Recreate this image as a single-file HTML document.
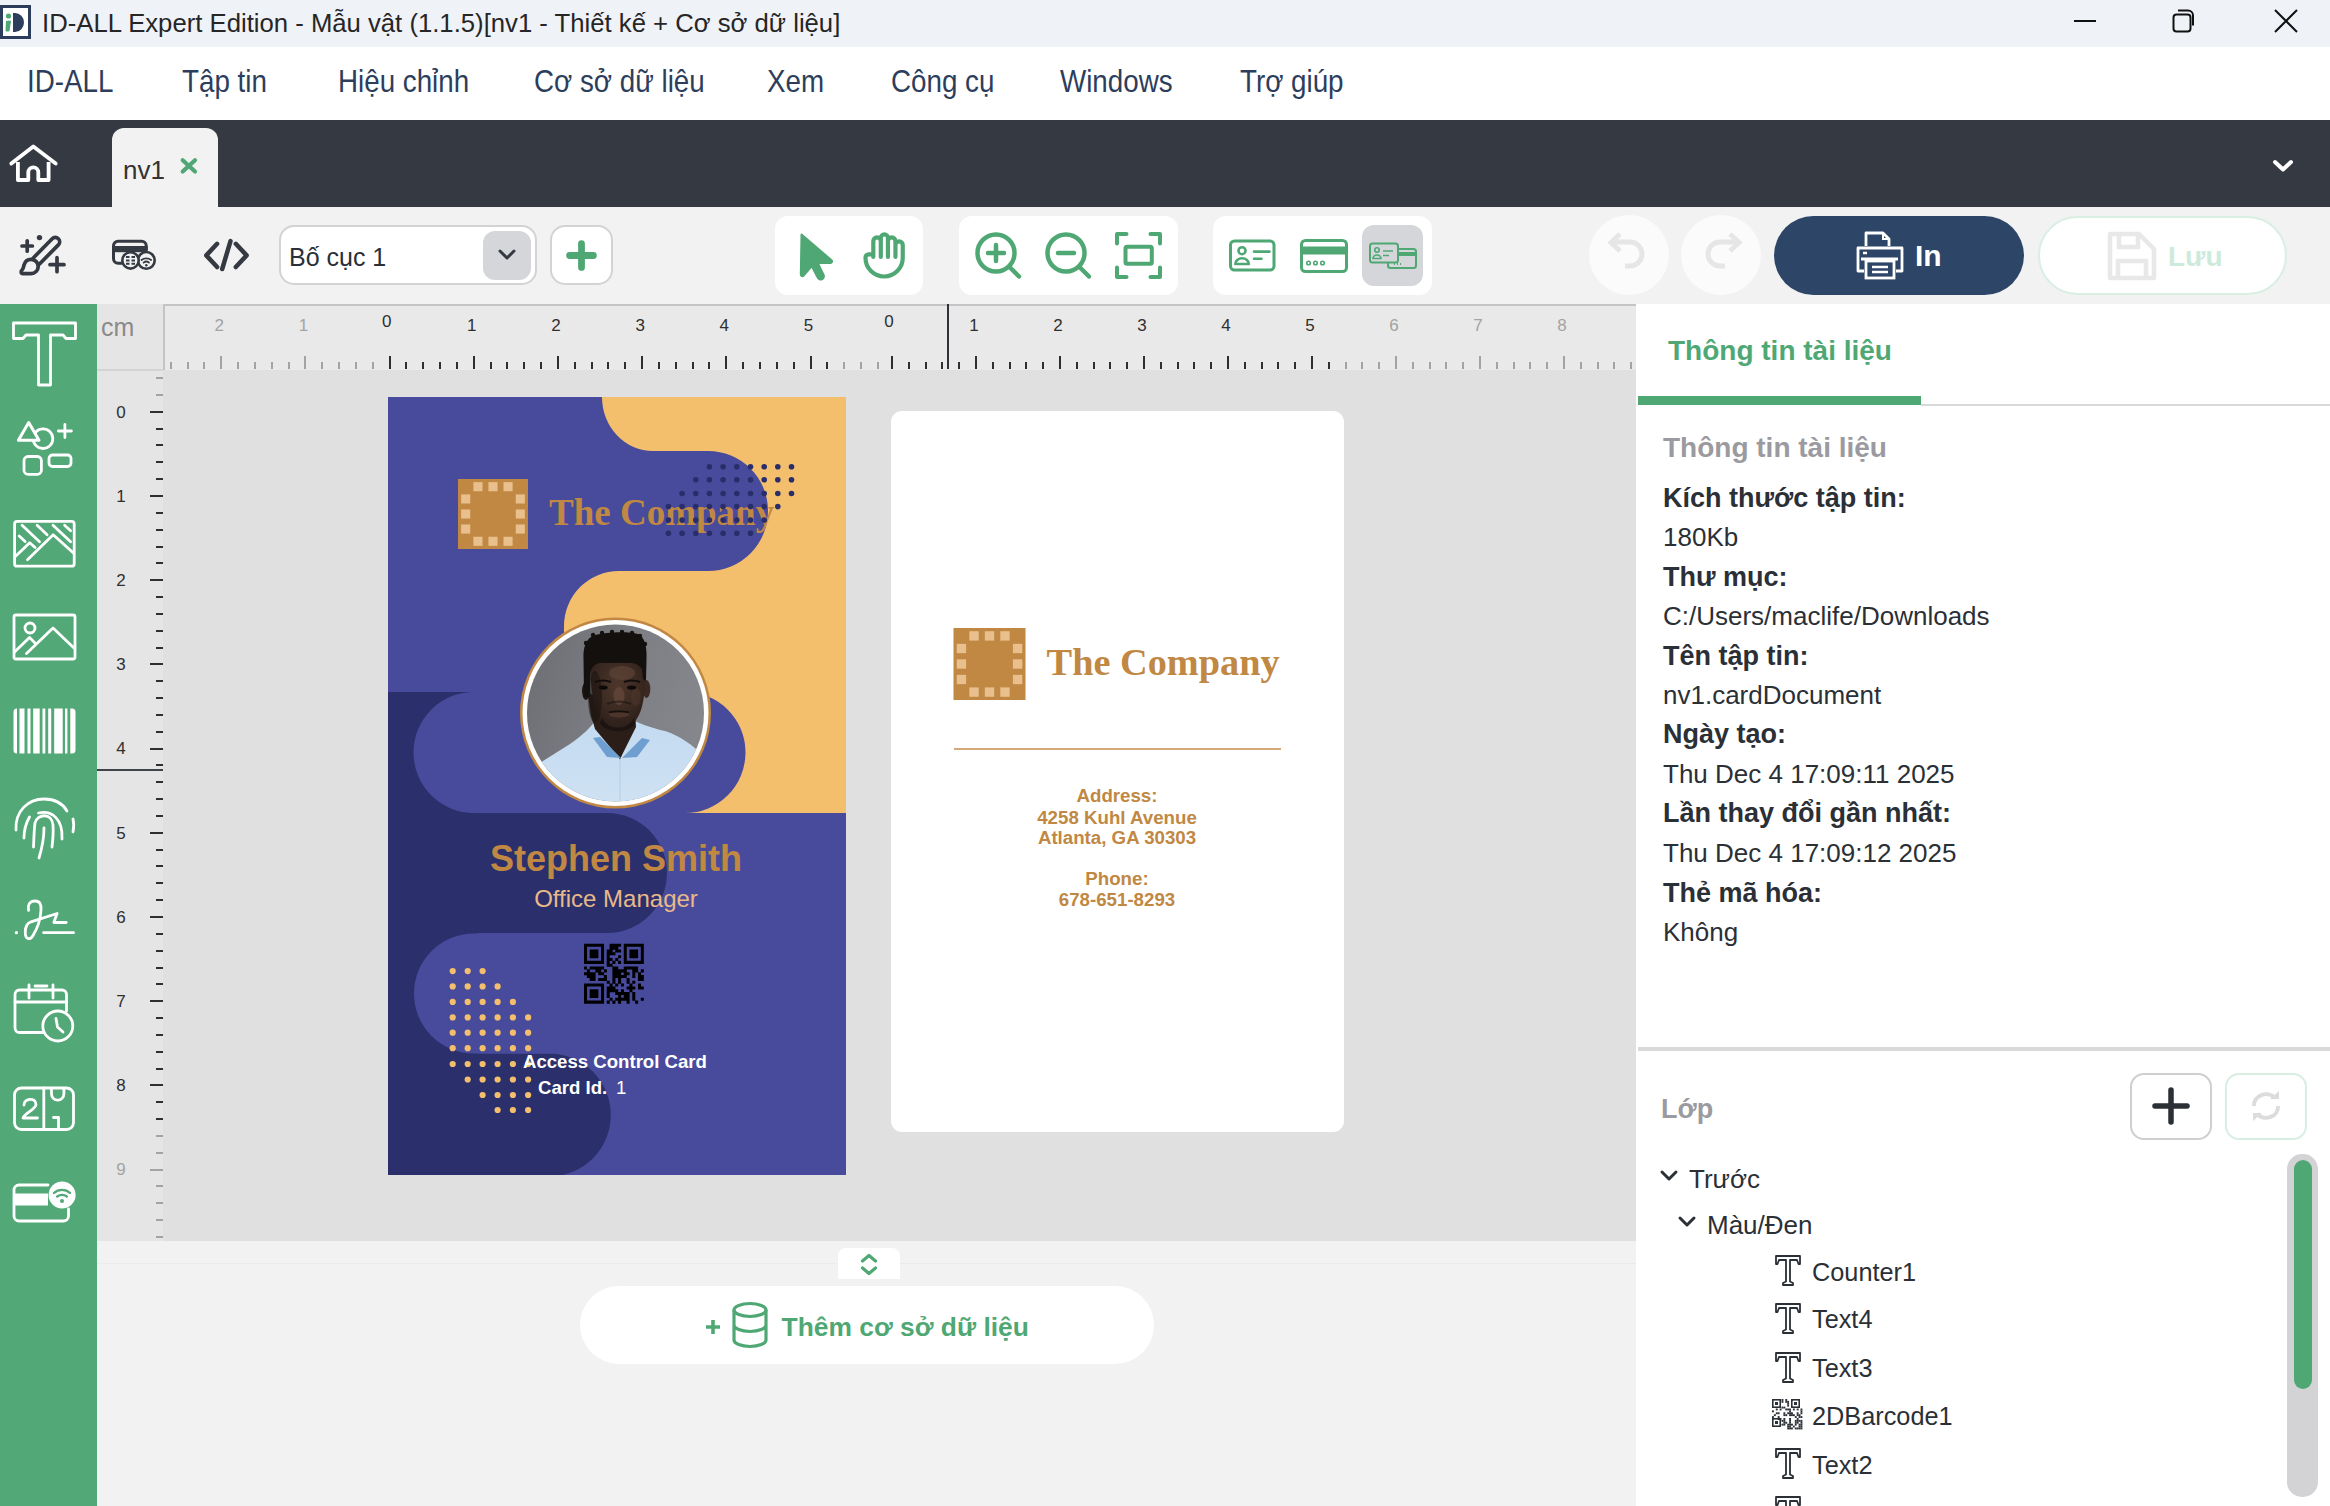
<!DOCTYPE html>
<html><head><meta charset="utf-8"><title>ID-ALL</title>
<style>
html,body{margin:0;padding:0;}
body{width:2330px;height:1506px;overflow:hidden;position:relative;background:#f2f2f2;font-family:"Liberation Sans", sans-serif;}
</style></head><body>
<div style="position:absolute;left:0px;top:0px;width:2330px;height:47px;background:#eff2f7;"></div>
<svg style="position:absolute;left:0px;top:5px;" width="32" height="34" viewBox="0 0 32 34"><rect x="1.5" y="1.5" width="28" height="31" fill="#fff" stroke="#2c3e5c" stroke-width="3"/><path d="M13,8 h2 a9,9.5 0 0 1 0,19 h-2 z" fill="#2c3e5c"/><circle cx="8.5" cy="11" r="2.6" fill="#4fa874"/><path d="M6,16 q3,-1 5,0 l-1.5,10 q-2,1 -4,0 z" fill="#4fa874"/></svg>
<div style="position:absolute;top:11.04px;font-family:'Liberation Sans', sans-serif;font-size:25.7px;line-height:25.7px;color:#262626;font-weight:normal;white-space:nowrap;left:42px;">ID-ALL Expert Edition - Mẫu vật (1.1.5)[nv1 - Thiết kế + Cơ sở dữ liệu]</div>
<svg style="position:absolute;left:2060px;top:0px;" width="260" height="47" viewBox="0 0 260 47"><line x1="14" y1="21" x2="36" y2="21" stroke="#111" stroke-width="2"/><rect x="113.5" y="14.5" width="17" height="17" rx="3" fill="none" stroke="#111" stroke-width="2"/><path d="M118,10.5 h10 a5,5 0 0 1 5,5 v10" fill="none" stroke="#111" stroke-width="2"/><path d="M215,10 L237,32 M237,10 L215,32" stroke="#111" stroke-width="2"/></svg>
<div style="position:absolute;left:0px;top:47px;width:2330px;height:73px;background:#ffffff;"></div>
<div style="position:absolute;top:65.68px;font-family:'Liberation Sans', sans-serif;font-size:30.5px;line-height:30.5px;color:#2c3e5c;font-weight:normal;white-space:nowrap;left:27px;transform:scaleX(0.91);transform-origin:0 0;">ID-ALL</div>
<div style="position:absolute;top:65.68px;font-family:'Liberation Sans', sans-serif;font-size:30.5px;line-height:30.5px;color:#2c3e5c;font-weight:normal;white-space:nowrap;left:182px;transform:scaleX(0.91);transform-origin:0 0;">Tập tin</div>
<div style="position:absolute;top:65.68px;font-family:'Liberation Sans', sans-serif;font-size:30.5px;line-height:30.5px;color:#2c3e5c;font-weight:normal;white-space:nowrap;left:338px;transform:scaleX(0.91);transform-origin:0 0;">Hiệu chỉnh</div>
<div style="position:absolute;top:65.68px;font-family:'Liberation Sans', sans-serif;font-size:30.5px;line-height:30.5px;color:#2c3e5c;font-weight:normal;white-space:nowrap;left:534px;transform:scaleX(0.91);transform-origin:0 0;">Cơ sở dữ liệu</div>
<div style="position:absolute;top:65.68px;font-family:'Liberation Sans', sans-serif;font-size:30.5px;line-height:30.5px;color:#2c3e5c;font-weight:normal;white-space:nowrap;left:767px;transform:scaleX(0.91);transform-origin:0 0;">Xem</div>
<div style="position:absolute;top:65.68px;font-family:'Liberation Sans', sans-serif;font-size:30.5px;line-height:30.5px;color:#2c3e5c;font-weight:normal;white-space:nowrap;left:891px;transform:scaleX(0.91);transform-origin:0 0;">Công cụ</div>
<div style="position:absolute;top:65.68px;font-family:'Liberation Sans', sans-serif;font-size:30.5px;line-height:30.5px;color:#2c3e5c;font-weight:normal;white-space:nowrap;left:1060px;transform:scaleX(0.91);transform-origin:0 0;">Windows</div>
<div style="position:absolute;top:65.68px;font-family:'Liberation Sans', sans-serif;font-size:30.5px;line-height:30.5px;color:#2c3e5c;font-weight:normal;white-space:nowrap;left:1240px;transform:scaleX(0.91);transform-origin:0 0;">Trợ giúp</div>
<div style="position:absolute;left:0px;top:120px;width:2330px;height:87px;background:#353a42;"></div>
<svg style="position:absolute;left:8px;top:142px;" width="52" height="44" viewBox="0 0 52 44"><path d="M3.3,21.5 L25.3,4.5 L47.7,21.5" fill="none" stroke="#fff" stroke-width="3.8" stroke-linecap="round" stroke-linejoin="round"/><path d="M9.9,20 V38 H20.3 V30.3 a5,5 0 0 1 10,0 V38 H40.6 V20" fill="none" stroke="#fff" stroke-width="3.8" stroke-linejoin="round"/></svg>
<div style="position:absolute;left:112px;top:128px;width:106px;height:79px;background:#f2f2f2;border-radius:12px 12px 0 0;"></div>
<div style="position:absolute;top:156.99px;font-family:'Liberation Sans', sans-serif;font-size:26px;line-height:26px;color:#333;font-weight:normal;white-space:nowrap;left:123px;">nv1</div>
<svg style="position:absolute;left:178px;top:155px;" width="22" height="22" viewBox="0 0 22 22"><path d="M4.7,5.2 L17,16.5 M17,5.2 L4.7,16.5" stroke="#4fa874" stroke-width="4.2" stroke-linecap="round"/></svg>
<svg style="position:absolute;left:2268px;top:154px;" width="30" height="22" viewBox="0 0 30 22"><path d="M7,8 L15,15.5 L23,8" fill="none" stroke="#fff" stroke-width="4" stroke-linecap="round" stroke-linejoin="round"/></svg>
<div style="position:absolute;left:0px;top:207px;width:2330px;height:97px;background:#f2f2f2;"></div>
<svg style="position:absolute;left:10px;top:225px;" width="70" height="60" viewBox="0 0 70 60"><line x1="26.4" y1="36" x2="45.3" y2="16.8" stroke="#353a42" stroke-width="12.4" stroke-linecap="round"/><line x1="26.4" y1="36" x2="45.3" y2="16.8" stroke="#f2f2f2" stroke-width="5" stroke-linecap="round"/><path d="M13,48.6 C10.8,48.6 10.5,46 12.3,44.6 C13.3,43.6 13.5,42 14,40 C15,36.3 17.8,34.3 21,34.3 C25,34.3 28.2,37.5 28.2,41.5 C28.2,45.5 25,48.6 21,48.6 Z" fill="#f2f2f2" stroke="#353a42" stroke-width="3.7" stroke-linejoin="round"/><path d="M17.2,15.8 V26.2 M12,21 H22.4 M47,32.7 V46.7 M40,39.7 H54" stroke="#353a42" stroke-width="3.7" stroke-linecap="round"/><circle cx="29.5" cy="12.6" r="2.7" fill="#353a42"/></svg>
<svg style="position:absolute;left:108px;top:236px;" width="52" height="40" viewBox="0 0 52 40"><path d="M14,27.3 H10 a4.5,4.5 0 0 1 -4.5,-4.5 V9.8 a4.5,4.5 0 0 1 4.5,-4.5 H33.7 a4.5,4.5 0 0 1 4.5,4.5 V14" fill="none" stroke="#353a42" stroke-width="3"/><rect x="4" y="10" width="35.7" height="6.2" fill="#353a42"/><circle cx="38.3" cy="24.4" r="8.4" fill="#f2f2f2" stroke="#353a42" stroke-width="2.6"/><circle cx="22.5" cy="24.4" r="8.2" fill="#f2f2f2" stroke="#353a42" stroke-width="2.6"/><path d="M18,21 h3.5 M23.5,21 h3.5 M18,24.4 h3.5 M23.5,24.4 h3.5 M18,27.8 h3.5 M23.5,27.8 h3.5" stroke="#353a42" stroke-width="2"/><path d="M33.5,24 a7,6 0 0 1 9.6,0 M35.6,26.6 a3.8,3.2 0 0 1 5.4,0" fill="none" stroke="#353a42" stroke-width="1.8" stroke-linecap="round"/><circle cx="38.3" cy="29.3" r="1.2" fill="#353a42"/></svg>
<svg style="position:absolute;left:200px;top:236px;" width="52" height="40" viewBox="0 0 52 40"><path d="M17.1,7.8 L6.3,19.4 L17.1,31 M35.8,7.8 L46.6,19.4 L35.8,31" fill="none" stroke="#353a42" stroke-width="4.5" stroke-linecap="round" stroke-linejoin="round"/><path d="M30.5,5.1 L22.2,33" stroke="#353a42" stroke-width="4.5" stroke-linecap="round"/></svg>
<div style="position:absolute;left:279px;top:225px;width:258px;height:60px;background:#fff;box-sizing:border-box;border:2px solid #d3d3d3;border-radius:15px;"></div>
<div style="position:absolute;left:483px;top:231px;width:48px;height:49px;background:#d5d6d9;border-radius:12px;"></div>
<svg style="position:absolute;left:493px;top:245px;" width="28" height="20" viewBox="0 0 28 20"><path d="M7,6 L14,13 L21,6" fill="none" stroke="#353a42" stroke-width="3" stroke-linecap="round" stroke-linejoin="round"/></svg>
<div style="position:absolute;top:245.34px;font-family:'Liberation Sans', sans-serif;font-size:25px;line-height:25px;color:#2b2f36;font-weight:normal;white-space:nowrap;left:289px;">Bố cục 1</div>
<div style="position:absolute;left:550px;top:225px;width:63px;height:60px;background:#fff;box-sizing:border-box;border:2px solid #d3d3d3;border-radius:15px;"></div>
<svg style="position:absolute;left:560px;top:235px;" width="44" height="40" viewBox="0 0 44 40"><path d="M21.5,8.6 V32.4 M9.6,20.5 H33.4" stroke="#4fa874" stroke-width="6.8" stroke-linecap="round"/></svg>
<div style="position:absolute;left:775px;top:216px;width:148px;height:79px;background:#fff;border-radius:13px;"></div>
<svg style="position:absolute;left:790px;top:225px;" width="130" height="65" viewBox="0 0 130 65"><path d="M11.5,9.5 L41.5,35.2 a1.6,1.6 0 0 1 -1,2.8 L27.8,38 L33.6,50 a3.2,3.2 0 0 1 -5.9,2.6 L21.8,41.2 L13.6,50.6 a1.6,1.6 0 0 1 -2.8,-1.1 Z" fill="#4fa874" stroke="#4fa874" stroke-width="2" stroke-linejoin="round"/><path d="M83.3,32 V16.15 A3.75,3.75 0 0 1 90.8,16.15 V32 M90.8,16.15 V13 A3.575,3.575 0 0 1 97.95,13 V32 M97.95,16.15 A3.75,3.75 0 0 1 105.45,16.15 V32 M105.45,19.95 A3.65,3.65 0 0 1 112.75,19.95 V33 A18.625,18.5 0 0 1 75.5,33 V32.5 A3.1,3.1 0 0 1 78.6,29.4 H83.3" fill="none" stroke="#4fa874" stroke-width="4.2" stroke-linecap="round" stroke-linejoin="round"/></svg>
<div style="position:absolute;left:959px;top:216px;width:219px;height:79px;background:#fff;border-radius:13px;"></div>
<svg style="position:absolute;left:970px;top:225px;" width="60" height="64" viewBox="0 0 60 64"><circle cx="26" cy="28" r="18.5" fill="none" stroke="#4fa874" stroke-width="4.5"/><path d="M39.5,42 L49,51.5" stroke="#4fa874" stroke-width="4.5" stroke-linecap="round"/><path d="M26,20 V36 M18,28 H34" stroke="#4fa874" stroke-width="4.5" stroke-linecap="round"/></svg>
<svg style="position:absolute;left:1040px;top:225px;" width="60" height="64" viewBox="0 0 60 64"><circle cx="26" cy="28" r="18.5" fill="none" stroke="#4fa874" stroke-width="4.5"/><path d="M39.5,42 L49,51.5" stroke="#4fa874" stroke-width="4.5" stroke-linecap="round"/><path d="M18,28 H34" stroke="#4fa874" stroke-width="4.5" stroke-linecap="round"/></svg>
<svg style="position:absolute;left:1110px;top:225px;" width="60" height="64" viewBox="0 0 60 64"><path d="M7,18.5 V9 H16.5 M40.5,9 H50 V18.5 M7,42.5 V52 H16.5 M40.5,52 H50 V42.5" fill="none" stroke="#4fa874" stroke-width="4" stroke-linecap="round" stroke-linejoin="round"/><rect x="15.5" y="21.7" width="26.3" height="17.1" rx="1.5" fill="none" stroke="#4fa874" stroke-width="4"/></svg>
<div style="position:absolute;left:1213px;top:216px;width:219px;height:79px;background:#fff;border-radius:13px;"></div>
<svg style="position:absolute;left:1224px;top:234px;" width="58" height="44" viewBox="0 0 58 44"><rect x="6.5" y="6.9" width="43.5" height="29.1" rx="4" fill="none" stroke="#4fa874" stroke-width="3"/><circle cx="18" cy="16.7" r="3.5" fill="none" stroke="#4fa874" stroke-width="2.6"/><path d="M11.3,30 a6.8,5.8 0 0 1 13.6,0 Z" fill="none" stroke="#4fa874" stroke-width="2.6" stroke-linejoin="round"/><path d="M30,17.6 H45.5 M30,24.8 H37.5" stroke="#4fa874" stroke-width="2.6" stroke-linecap="round"/></svg>
<svg style="position:absolute;left:1295px;top:234px;" width="58" height="44" viewBox="0 0 58 44"><rect x="6.5" y="6.5" width="45" height="31" rx="4" fill="none" stroke="#4fa874" stroke-width="3"/><rect x="6.5" y="12.5" width="45" height="8" fill="#4fa874"/><circle cx="13.5" cy="29" r="1.8" fill="none" stroke="#4fa874" stroke-width="1.6"/><circle cx="20.5" cy="29" r="1.8" fill="none" stroke="#4fa874" stroke-width="1.6"/><circle cx="27.5" cy="29" r="1.8" fill="none" stroke="#4fa874" stroke-width="1.6"/></svg>
<div style="position:absolute;left:1362px;top:225px;width:61px;height:61px;background:#d5d6d9;border-radius:12px;"></div>
<svg style="position:absolute;left:1366px;top:240px;" width="54" height="32" viewBox="0 0 54 32"><rect x="22" y="9" width="28" height="19" rx="2.5" fill="#d5d6d9" stroke="#4fa874" stroke-width="2"/><rect x="22" y="12" width="28" height="4" fill="#4fa874"/><path d="M28,24 h1 M31,24 h1 M34,24 h1" stroke="#4fa874" stroke-width="2"/><rect x="4" y="3.5" width="28" height="19" rx="2.5" fill="#d5d6d9" stroke="#4fa874" stroke-width="2"/><circle cx="11" cy="10" r="2.2" fill="none" stroke="#4fa874" stroke-width="1.6"/><path d="M7,18.5 a4,3.5 0 0 1 8,0 Z" fill="none" stroke="#4fa874" stroke-width="1.6"/><path d="M17,11 H27 M17,15.5 H23" stroke="#4fa874" stroke-width="1.6"/></svg>
<div style="position:absolute;left:1589px;top:215px;width:80px;height:80px;background:#fbfbfb;border-radius:50%;"></div>
<div style="position:absolute;left:1681px;top:215px;width:80px;height:80px;background:#fbfbfb;border-radius:50%;"></div>
<svg style="position:absolute;left:1599px;top:225px;" width="60" height="60" viewBox="0 0 60 60"><path d="M14,17 H31 a12,12 0 0 1 0,24 H26" fill="none" stroke="#e6e6e6" stroke-width="5"/><path d="M21,9 L12,17.5 L21,26" fill="none" stroke="#e6e6e6" stroke-width="5" stroke-linejoin="miter"/></svg>
<svg style="position:absolute;left:1691px;top:225px;" width="60" height="60" viewBox="0 0 60 60"><path d="M46,17 H29 a12,12 0 0 0 0,24 H34" fill="none" stroke="#e6e6e6" stroke-width="5"/><path d="M39,9 L48,17.5 L39,26" fill="none" stroke="#e6e6e6" stroke-width="5" stroke-linejoin="miter"/></svg>
<div style="position:absolute;left:1774px;top:216px;width:250px;height:79px;background:#2d4566;border-radius:40px;"></div>
<svg style="position:absolute;left:1852px;top:228px;" width="56" height="56" viewBox="0 0 56 56"><path d="M14,18 V5 H31 L37,11 V18" fill="none" stroke="#fff" stroke-width="2.8" stroke-linejoin="round"/><path d="M31,5 V11 H37" fill="none" stroke="#fff" stroke-width="2"/><path d="M12,43 H6 V20 H50 V43 H44" fill="none" stroke="#fff" stroke-width="2.8" stroke-linejoin="round"/><rect x="14" y="33" width="28" height="17" fill="none" stroke="#fff" stroke-width="2.8"/><path d="M9,31 H46" stroke="#fff" stroke-width="2.8"/><path d="M20,39 H36 M20,44 H36 M11,25 H15" stroke="#fff" stroke-width="2.4"/></svg>
<div style="position:absolute;top:241.41px;font-family:'Liberation Sans', sans-serif;font-size:30px;line-height:30px;color:#ffffff;font-weight:bold;white-space:nowrap;left:1915px;">In</div>
<div style="position:absolute;left:2038px;top:216px;width:249px;height:79px;background:#fff;box-sizing:border-box;border:2px solid #d9efe3;border-radius:40px;"></div>
<svg style="position:absolute;left:2104px;top:228px;" width="56" height="56" viewBox="0 0 56 56"><path d="M6,6 H35 L50,21 V50 H6 Z" fill="none" stroke="#e8e8e8" stroke-width="4.5" stroke-linejoin="round"/><path d="M15,6 V19 H34 V6" fill="none" stroke="#e8e8e8" stroke-width="4.5"/><path d="M14,50 V33 H42 V50" fill="none" stroke="#e8e8e8" stroke-width="4.5"/></svg>
<div style="position:absolute;top:243.10px;font-family:'Liberation Sans', sans-serif;font-size:28px;line-height:28px;color:#cdeadb;font-weight:bold;white-space:nowrap;left:2168px;">Lưu</div>
<div style="position:absolute;left:0px;top:304px;width:97px;height:1202px;background:#52a877;"></div>
<svg style="position:absolute;left:0px;top:303px;" width="97" height="1203" viewBox="0 0 97 1203"><path d="M13.5,20 H75.5 V35.5 H66 L63,32 H50.5 V82 H38.5 V32 H26 L23,35.5 H13.5 Z" fill="none" stroke="#fff" stroke-width="2.8" stroke-linecap="round" stroke-linejoin="round"/><circle cx="43" cy="135.7" r="9.8" fill="none" stroke="#fff" stroke-width="2.8" stroke-linecap="round" stroke-linejoin="round" stroke-width="3"/><path d="M28.7,119.5 L39,137.3 H18.4 Z" fill="#52a877" stroke="#fff" stroke-width="3" stroke-linejoin="round"/><path d="M64.9,121.5 V134.5 M58.4,128 H71.4" fill="none" stroke="#fff" stroke-width="2.8" stroke-linecap="round" stroke-linejoin="round" stroke-width="3"/><rect x="24" y="153.5" width="17.4" height="17.8" rx="4" fill="none" stroke="#fff" stroke-width="2.8" stroke-linecap="round" stroke-linejoin="round" stroke-width="3"/><rect x="49" y="152" width="22" height="11.5" rx="3.5" fill="none" stroke="#fff" stroke-width="2.8" stroke-linecap="round" stroke-linejoin="round" stroke-width="3"/><rect x="14.6" y="218.4" width="59.6" height="44.8" rx="2.5" fill="none" stroke="#fff" stroke-width="2.8" stroke-linecap="round" stroke-linejoin="round" stroke-width="2.8"/><path d="M14.8,254 L29.7,239.7 L35.1,244.5 M27.5,256.8 L53.2,231.7 L73.4,250" fill="none" stroke="#fff" stroke-width="2.8" stroke-linecap="round" stroke-linejoin="round" stroke-width="2.8"/><path d="M22.1,222.2 L39.5,238.7 M37.1,222.2 L47.1,231.7 M53,222.2 L70.6,238.7 M64.6,222.2 L70.6,227.7 M19.2,232.9 L25.1,238.5" fill="none" stroke="#fff" stroke-width="2.8" stroke-linecap="round" stroke-linejoin="round" stroke-width="2.8"/><rect x="14" y="312" width="61" height="44" rx="2" fill="none" stroke="#fff" stroke-width="2.8" stroke-linecap="round" stroke-linejoin="round"/><circle cx="30" cy="325" r="5" fill="none" stroke="#fff" stroke-width="2.8" stroke-linecap="round" stroke-linejoin="round"/><path d="M14.5,349 L29.5,334.5 L35,340 M26.5,350.5 L53,325 L74,345" fill="none" stroke="#fff" stroke-width="2.8" stroke-linecap="round" stroke-linejoin="round"/><path d="M17,405.5 a3.5,3.5 0 0 0 -3.5,3.5 V447 a3.5,3.5 0 0 0 3.5,3.5 Z" fill="#fff"/><rect x="19.5" y="405.5" width="5" height="45" fill="#fff"/><rect x="27.5" y="405.5" width="3" height="45" fill="#fff"/><rect x="33.2" y="405.5" width="6.5" height="45" fill="#fff"/><rect x="42.5" y="405.5" width="2.8" height="45" fill="#fff"/><rect x="48.2" y="405.5" width="3" height="45" fill="#fff"/><rect x="54.2" y="405.5" width="8.5" height="45" fill="#fff"/><rect x="65" y="405.5" width="2.4" height="45" fill="#fff"/><path d="M70.3,405.5 H72 a3.5,3.5 0 0 1 3.5,3.5 V447 a3.5,3.5 0 0 1 -3.5,3.5 H70.3 Z" fill="#fff"/><path d="M16,527 C15,508 28,496 44,496 C55,496 63,501 67,508" fill="none" stroke="#fff" stroke-width="2.8" stroke-linecap="round" stroke-linejoin="round" stroke-width="2.8"/><path d="M73,516 C74,520 74,524 73,529" fill="none" stroke="#fff" stroke-width="2.8" stroke-linecap="round" stroke-linejoin="round" stroke-width="2.8"/><path d="M38.5,510 C52,507 63,516 62,536" fill="none" stroke="#fff" stroke-width="2.8" stroke-linecap="round" stroke-linejoin="round" stroke-width="2.8"/><path d="M29.5,514 C26,520 24,528 24,535" fill="none" stroke="#fff" stroke-width="2.8" stroke-linecap="round" stroke-linejoin="round" stroke-width="2.8"/><path d="M33.5,544 C34,535 34,527 35,520 C37,511 52,509 53,522 C53.5,530 53,536 52,544" fill="none" stroke="#fff" stroke-width="2.8" stroke-linecap="round" stroke-linejoin="round" stroke-width="2.8"/><path d="M44,525 C44,537 42,545 39,555" fill="none" stroke="#fff" stroke-width="2.8" stroke-linecap="round" stroke-linejoin="round" stroke-width="2.8"/><circle cx="16.4" cy="629.7" r="1.6" fill="#fff"/><path d="M28.6,607.4 C27.5,600 31,598 35.2,598 C39.5,598 41.5,601 41,607 C40.5,617 37,626 33,632.5 C30,637.5 25.5,636.5 25.3,630 C25,624 26.5,620.5 31,618.8 L57.1,610.5 L53.8,619.5 H66.2" fill="none" stroke="#fff" stroke-width="2.8" stroke-linecap="round" stroke-linejoin="round" stroke-width="2.4"/><path d="M43.6,629.7 H73.5" fill="none" stroke="#fff" stroke-width="2.8" stroke-linecap="round" stroke-linejoin="round" stroke-width="2.4"/><path d="M43,729.5 H19.5 a4.5,4.5 0 0 1 -4.5,-4.5 V691.5 a4.5,4.5 0 0 1 4.5,-4.5 H62 a4.5,4.5 0 0 1 4.5,4.5 V708" fill="none" stroke="#fff" stroke-width="2.8" stroke-linecap="round" stroke-linejoin="round" stroke-width="2.8"/><path d="M15,699 H66.5 M29,682 V695 M53,682 V695 M35,683 H47" fill="none" stroke="#fff" stroke-width="2.8" stroke-linecap="round" stroke-linejoin="round" stroke-width="2.8"/><circle cx="57.8" cy="723" r="15" fill="#52a877" stroke="#fff" stroke-width="2.8"/><path d="M56,715.5 L57.5,724 L63,729" fill="none" stroke="#fff" stroke-width="2.8" stroke-linecap="round" stroke-linejoin="round" stroke-width="2.6"/><rect x="14.5" y="785" width="59" height="41.5" rx="7" fill="none" stroke="#fff" stroke-width="2.8" stroke-linecap="round" stroke-linejoin="round" stroke-width="2.8"/><path d="M43.8,785 V826.5" fill="none" stroke="#fff" stroke-width="2.8" stroke-linecap="round" stroke-linejoin="round" stroke-width="2.8"/><path d="M24,802 C24,795 36,794 36,801.5 C36,806 24,811 23,815 H37.5" fill="none" stroke="#fff" stroke-width="2.8" stroke-linecap="round" stroke-linejoin="round" stroke-width="2.6"/><path d="M51.5,786 V791 a6.2,6.2 0 0 0 12.4,0 V786" fill="none" stroke="#fff" stroke-width="2.8" stroke-linecap="round" stroke-linejoin="round" stroke-width="2.6"/><path d="M53.5,814.5 H58.5 V825" fill="none" stroke="#fff" stroke-width="2.8" stroke-linecap="round" stroke-linejoin="round" stroke-width="2.6"/><path d="M48,882 H19 a5,5 0 0 0 -5,5 V913 a5,5 0 0 0 5,5 H63.5 a5,5 0 0 0 5,-5 V906" fill="none" stroke="#fff" stroke-width="2.8" stroke-linecap="round" stroke-linejoin="round" stroke-width="2.8"/><rect x="14" y="890.5" width="34" height="12" fill="#fff"/><circle cx="62.1" cy="892" r="13.5" fill="#fff"/><path d="M54,890 a11,10 0 0 1 16,0 M57.2,893.5 a7,6 0 0 1 9.6,0" fill="none" stroke="#52a877" stroke-width="2.4" stroke-linecap="round"/><circle cx="62" cy="898" r="2" fill="#52a877"/></svg>
<div style="position:absolute;left:97px;top:304px;width:1539px;height:66px;background:#e9e9e9;"></div>
<div style="position:absolute;left:97px;top:304px;width:66px;height:66px;background:#e5e5e5;"></div>
<div style="position:absolute;left:163px;top:304px;width:1473px;height:2px;background:#c4c4c4;"></div>
<div style="position:absolute;left:163px;top:304px;width:2px;height:66px;background:#c4c4c4;"></div>
<div style="position:absolute;left:97px;top:370px;width:66px;height:871px;background:#e5e5e5;"></div>
<div style="position:absolute;left:97px;top:369px;width:66px;height:2px;background:#d4d4d4;"></div>
<div style="position:absolute;left:163px;top:370px;width:1473px;height:871px;background:#e0e0e0;"></div>
<div style="position:absolute;top:314.84px;font-family:'Liberation Sans', sans-serif;font-size:25px;line-height:25px;color:#8a8a8a;font-weight:normal;white-space:nowrap;left:101px;">cm</div>
<div style="position:absolute;left:170px;top:362px;width:2px;height:7px;background:#a3a3a3;"></div>
<div style="position:absolute;left:187px;top:362px;width:2px;height:7px;background:#a3a3a3;"></div>
<div style="position:absolute;left:203px;top:362px;width:2px;height:7px;background:#a3a3a3;"></div>
<div style="position:absolute;left:220px;top:356px;width:2px;height:13px;background:#a3a3a3;"></div>
<div style="position:absolute;top:316.61px;font-family:'Liberation Sans', sans-serif;font-size:17px;line-height:17px;color:#a3a3a3;font-weight:normal;white-space:nowrap;left:-280.76px;width:1000px;text-align:center;">2</div>
<div style="position:absolute;left:237px;top:362px;width:2px;height:7px;background:#a3a3a3;"></div>
<div style="position:absolute;left:254px;top:362px;width:2px;height:7px;background:#a3a3a3;"></div>
<div style="position:absolute;left:271px;top:362px;width:2px;height:7px;background:#a3a3a3;"></div>
<div style="position:absolute;left:288px;top:362px;width:2px;height:7px;background:#a3a3a3;"></div>
<div style="position:absolute;left:304px;top:356px;width:2px;height:13px;background:#a3a3a3;"></div>
<div style="position:absolute;top:316.61px;font-family:'Liberation Sans', sans-serif;font-size:17px;line-height:17px;color:#a3a3a3;font-weight:normal;white-space:nowrap;left:-196.57999999999998px;width:1000px;text-align:center;">1</div>
<div style="position:absolute;left:321px;top:362px;width:2px;height:7px;background:#a3a3a3;"></div>
<div style="position:absolute;left:338px;top:362px;width:2px;height:7px;background:#a3a3a3;"></div>
<div style="position:absolute;left:355px;top:362px;width:2px;height:7px;background:#a3a3a3;"></div>
<div style="position:absolute;left:372px;top:362px;width:2px;height:7px;background:#a3a3a3;"></div>
<div style="position:absolute;left:389px;top:356px;width:2px;height:13px;background:#2f2f2f;"></div>
<div style="position:absolute;top:313.11px;font-family:'Liberation Sans', sans-serif;font-size:17px;line-height:17px;color:#2f2f2f;font-weight:normal;white-space:nowrap;left:-113.39999999999998px;width:1000px;text-align:center;">0</div>
<div style="position:absolute;left:405px;top:362px;width:2px;height:7px;background:#2f2f2f;"></div>
<div style="position:absolute;left:422px;top:362px;width:2px;height:7px;background:#2f2f2f;"></div>
<div style="position:absolute;left:439px;top:362px;width:2px;height:7px;background:#2f2f2f;"></div>
<div style="position:absolute;left:456px;top:362px;width:2px;height:7px;background:#2f2f2f;"></div>
<div style="position:absolute;left:473px;top:356px;width:2px;height:13px;background:#2f2f2f;"></div>
<div style="position:absolute;top:316.61px;font-family:'Liberation Sans', sans-serif;font-size:17px;line-height:17px;color:#2f2f2f;font-weight:normal;white-space:nowrap;left:-28.21999999999997px;width:1000px;text-align:center;">1</div>
<div style="position:absolute;left:490px;top:362px;width:2px;height:7px;background:#2f2f2f;"></div>
<div style="position:absolute;left:506px;top:362px;width:2px;height:7px;background:#2f2f2f;"></div>
<div style="position:absolute;left:523px;top:362px;width:2px;height:7px;background:#2f2f2f;"></div>
<div style="position:absolute;left:540px;top:362px;width:2px;height:7px;background:#2f2f2f;"></div>
<div style="position:absolute;left:557px;top:356px;width:2px;height:13px;background:#2f2f2f;"></div>
<div style="position:absolute;top:316.61px;font-family:'Liberation Sans', sans-serif;font-size:17px;line-height:17px;color:#2f2f2f;font-weight:normal;white-space:nowrap;left:55.960000000000036px;width:1000px;text-align:center;">2</div>
<div style="position:absolute;left:574px;top:362px;width:2px;height:7px;background:#2f2f2f;"></div>
<div style="position:absolute;left:591px;top:362px;width:2px;height:7px;background:#2f2f2f;"></div>
<div style="position:absolute;left:607px;top:362px;width:2px;height:7px;background:#2f2f2f;"></div>
<div style="position:absolute;left:624px;top:362px;width:2px;height:7px;background:#2f2f2f;"></div>
<div style="position:absolute;left:641px;top:356px;width:2px;height:13px;background:#2f2f2f;"></div>
<div style="position:absolute;top:316.61px;font-family:'Liberation Sans', sans-serif;font-size:17px;line-height:17px;color:#2f2f2f;font-weight:normal;white-space:nowrap;left:140.1400000000001px;width:1000px;text-align:center;">3</div>
<div style="position:absolute;left:658px;top:362px;width:2px;height:7px;background:#2f2f2f;"></div>
<div style="position:absolute;left:675px;top:362px;width:2px;height:7px;background:#2f2f2f;"></div>
<div style="position:absolute;left:692px;top:362px;width:2px;height:7px;background:#2f2f2f;"></div>
<div style="position:absolute;left:708px;top:362px;width:2px;height:7px;background:#2f2f2f;"></div>
<div style="position:absolute;left:725px;top:356px;width:2px;height:13px;background:#2f2f2f;"></div>
<div style="position:absolute;top:316.61px;font-family:'Liberation Sans', sans-serif;font-size:17px;line-height:17px;color:#2f2f2f;font-weight:normal;white-space:nowrap;left:224.32000000000005px;width:1000px;text-align:center;">4</div>
<div style="position:absolute;left:742px;top:362px;width:2px;height:7px;background:#2f2f2f;"></div>
<div style="position:absolute;left:759px;top:362px;width:2px;height:7px;background:#2f2f2f;"></div>
<div style="position:absolute;left:776px;top:362px;width:2px;height:7px;background:#2f2f2f;"></div>
<div style="position:absolute;left:793px;top:362px;width:2px;height:7px;background:#2f2f2f;"></div>
<div style="position:absolute;left:810px;top:356px;width:2px;height:13px;background:#2f2f2f;"></div>
<div style="position:absolute;top:316.61px;font-family:'Liberation Sans', sans-serif;font-size:17px;line-height:17px;color:#2f2f2f;font-weight:normal;white-space:nowrap;left:308.5px;width:1000px;text-align:center;">5</div>
<div style="position:absolute;left:826px;top:362px;width:2px;height:7px;background:#2f2f2f;"></div>
<div style="position:absolute;left:843px;top:362px;width:2px;height:7px;background:#a3a3a3;"></div>
<div style="position:absolute;left:860px;top:362px;width:2px;height:7px;background:#a3a3a3;"></div>
<div style="position:absolute;left:877px;top:362px;width:2px;height:7px;background:#a3a3a3;"></div>
<div style="position:absolute;left:891px;top:356px;width:2px;height:13px;background:#2f2f2f;"></div>
<div style="position:absolute;top:313.11px;font-family:'Liberation Sans', sans-serif;font-size:17px;line-height:17px;color:#2f2f2f;font-weight:normal;white-space:nowrap;left:389.0px;width:1000px;text-align:center;">0</div>
<div style="position:absolute;left:908px;top:362px;width:2px;height:7px;background:#2f2f2f;"></div>
<div style="position:absolute;left:925px;top:362px;width:2px;height:7px;background:#2f2f2f;"></div>
<div style="position:absolute;left:941px;top:362px;width:2px;height:7px;background:#2f2f2f;"></div>
<div style="position:absolute;left:958px;top:362px;width:2px;height:7px;background:#2f2f2f;"></div>
<div style="position:absolute;left:975px;top:356px;width:2px;height:13px;background:#2f2f2f;"></div>
<div style="position:absolute;top:316.61px;font-family:'Liberation Sans', sans-serif;font-size:17px;line-height:17px;color:#2f2f2f;font-weight:normal;white-space:nowrap;left:474.0px;width:1000px;text-align:center;">1</div>
<div style="position:absolute;left:992px;top:362px;width:2px;height:7px;background:#2f2f2f;"></div>
<div style="position:absolute;left:1009px;top:362px;width:2px;height:7px;background:#2f2f2f;"></div>
<div style="position:absolute;left:1025px;top:362px;width:2px;height:7px;background:#2f2f2f;"></div>
<div style="position:absolute;left:1042px;top:362px;width:2px;height:7px;background:#2f2f2f;"></div>
<div style="position:absolute;left:1059px;top:356px;width:2px;height:13px;background:#2f2f2f;"></div>
<div style="position:absolute;top:316.61px;font-family:'Liberation Sans', sans-serif;font-size:17px;line-height:17px;color:#2f2f2f;font-weight:normal;white-space:nowrap;left:558.0px;width:1000px;text-align:center;">2</div>
<div style="position:absolute;left:1076px;top:362px;width:2px;height:7px;background:#2f2f2f;"></div>
<div style="position:absolute;left:1093px;top:362px;width:2px;height:7px;background:#2f2f2f;"></div>
<div style="position:absolute;left:1109px;top:362px;width:2px;height:7px;background:#2f2f2f;"></div>
<div style="position:absolute;left:1126px;top:362px;width:2px;height:7px;background:#2f2f2f;"></div>
<div style="position:absolute;left:1143px;top:356px;width:2px;height:13px;background:#2f2f2f;"></div>
<div style="position:absolute;top:316.61px;font-family:'Liberation Sans', sans-serif;font-size:17px;line-height:17px;color:#2f2f2f;font-weight:normal;white-space:nowrap;left:642.0px;width:1000px;text-align:center;">3</div>
<div style="position:absolute;left:1160px;top:362px;width:2px;height:7px;background:#2f2f2f;"></div>
<div style="position:absolute;left:1177px;top:362px;width:2px;height:7px;background:#2f2f2f;"></div>
<div style="position:absolute;left:1193px;top:362px;width:2px;height:7px;background:#2f2f2f;"></div>
<div style="position:absolute;left:1210px;top:362px;width:2px;height:7px;background:#2f2f2f;"></div>
<div style="position:absolute;left:1227px;top:356px;width:2px;height:13px;background:#2f2f2f;"></div>
<div style="position:absolute;top:316.61px;font-family:'Liberation Sans', sans-serif;font-size:17px;line-height:17px;color:#2f2f2f;font-weight:normal;white-space:nowrap;left:726.0px;width:1000px;text-align:center;">4</div>
<div style="position:absolute;left:1244px;top:362px;width:2px;height:7px;background:#2f2f2f;"></div>
<div style="position:absolute;left:1261px;top:362px;width:2px;height:7px;background:#2f2f2f;"></div>
<div style="position:absolute;left:1277px;top:362px;width:2px;height:7px;background:#2f2f2f;"></div>
<div style="position:absolute;left:1294px;top:362px;width:2px;height:7px;background:#2f2f2f;"></div>
<div style="position:absolute;left:1311px;top:356px;width:2px;height:13px;background:#2f2f2f;"></div>
<div style="position:absolute;top:316.61px;font-family:'Liberation Sans', sans-serif;font-size:17px;line-height:17px;color:#2f2f2f;font-weight:normal;white-space:nowrap;left:810.0px;width:1000px;text-align:center;">5</div>
<div style="position:absolute;left:1328px;top:362px;width:2px;height:7px;background:#2f2f2f;"></div>
<div style="position:absolute;left:1345px;top:362px;width:2px;height:7px;background:#a3a3a3;"></div>
<div style="position:absolute;left:1361px;top:362px;width:2px;height:7px;background:#a3a3a3;"></div>
<div style="position:absolute;left:1378px;top:362px;width:2px;height:7px;background:#a3a3a3;"></div>
<div style="position:absolute;left:1395px;top:356px;width:2px;height:13px;background:#a3a3a3;"></div>
<div style="position:absolute;top:316.61px;font-family:'Liberation Sans', sans-serif;font-size:17px;line-height:17px;color:#a3a3a3;font-weight:normal;white-space:nowrap;left:894.0px;width:1000px;text-align:center;">6</div>
<div style="position:absolute;left:1412px;top:362px;width:2px;height:7px;background:#a3a3a3;"></div>
<div style="position:absolute;left:1429px;top:362px;width:2px;height:7px;background:#a3a3a3;"></div>
<div style="position:absolute;left:1445px;top:362px;width:2px;height:7px;background:#a3a3a3;"></div>
<div style="position:absolute;left:1462px;top:362px;width:2px;height:7px;background:#a3a3a3;"></div>
<div style="position:absolute;left:1479px;top:356px;width:2px;height:13px;background:#a3a3a3;"></div>
<div style="position:absolute;top:316.61px;font-family:'Liberation Sans', sans-serif;font-size:17px;line-height:17px;color:#a3a3a3;font-weight:normal;white-space:nowrap;left:978.0px;width:1000px;text-align:center;">7</div>
<div style="position:absolute;left:1496px;top:362px;width:2px;height:7px;background:#a3a3a3;"></div>
<div style="position:absolute;left:1513px;top:362px;width:2px;height:7px;background:#a3a3a3;"></div>
<div style="position:absolute;left:1529px;top:362px;width:2px;height:7px;background:#a3a3a3;"></div>
<div style="position:absolute;left:1546px;top:362px;width:2px;height:7px;background:#a3a3a3;"></div>
<div style="position:absolute;left:1563px;top:356px;width:2px;height:13px;background:#a3a3a3;"></div>
<div style="position:absolute;top:316.61px;font-family:'Liberation Sans', sans-serif;font-size:17px;line-height:17px;color:#a3a3a3;font-weight:normal;white-space:nowrap;left:1062.0px;width:1000px;text-align:center;">8</div>
<div style="position:absolute;left:1580px;top:362px;width:2px;height:7px;background:#a3a3a3;"></div>
<div style="position:absolute;left:1597px;top:362px;width:2px;height:7px;background:#a3a3a3;"></div>
<div style="position:absolute;left:1613px;top:362px;width:2px;height:7px;background:#a3a3a3;"></div>
<div style="position:absolute;left:1630px;top:362px;width:2px;height:7px;background:#a3a3a3;"></div>
<div style="position:absolute;left:946.5px;top:304px;width:2px;height:65px;background:#2f3238;"></div>
<div style="position:absolute;left:156px;top:377px;width:7px;height:2px;background:#a3a3a3;"></div>
<div style="position:absolute;left:156px;top:394px;width:7px;height:2px;background:#a3a3a3;"></div>
<div style="position:absolute;left:150px;top:411px;width:13px;height:2px;background:#2f2f2f;"></div>
<div style="position:absolute;top:403.61px;font-family:'Liberation Sans', sans-serif;font-size:17px;line-height:17px;color:#2f2f2f;font-weight:normal;white-space:nowrap;left:-379px;width:1000px;text-align:center;">0</div>
<div style="position:absolute;left:156px;top:428px;width:7px;height:2px;background:#2f2f2f;"></div>
<div style="position:absolute;left:156px;top:444px;width:7px;height:2px;background:#2f2f2f;"></div>
<div style="position:absolute;left:156px;top:461px;width:7px;height:2px;background:#2f2f2f;"></div>
<div style="position:absolute;left:156px;top:478px;width:7px;height:2px;background:#2f2f2f;"></div>
<div style="position:absolute;left:150px;top:495px;width:13px;height:2px;background:#2f2f2f;"></div>
<div style="position:absolute;top:487.81px;font-family:'Liberation Sans', sans-serif;font-size:17px;line-height:17px;color:#2f2f2f;font-weight:normal;white-space:nowrap;left:-379px;width:1000px;text-align:center;">1</div>
<div style="position:absolute;left:156px;top:512px;width:7px;height:2px;background:#2f2f2f;"></div>
<div style="position:absolute;left:156px;top:529px;width:7px;height:2px;background:#2f2f2f;"></div>
<div style="position:absolute;left:156px;top:546px;width:7px;height:2px;background:#2f2f2f;"></div>
<div style="position:absolute;left:156px;top:562px;width:7px;height:2px;background:#2f2f2f;"></div>
<div style="position:absolute;left:150px;top:579px;width:13px;height:2px;background:#2f2f2f;"></div>
<div style="position:absolute;top:572.01px;font-family:'Liberation Sans', sans-serif;font-size:17px;line-height:17px;color:#2f2f2f;font-weight:normal;white-space:nowrap;left:-379px;width:1000px;text-align:center;">2</div>
<div style="position:absolute;left:156px;top:596px;width:7px;height:2px;background:#2f2f2f;"></div>
<div style="position:absolute;left:156px;top:613px;width:7px;height:2px;background:#2f2f2f;"></div>
<div style="position:absolute;left:156px;top:630px;width:7px;height:2px;background:#2f2f2f;"></div>
<div style="position:absolute;left:156px;top:647px;width:7px;height:2px;background:#2f2f2f;"></div>
<div style="position:absolute;left:150px;top:663px;width:13px;height:2px;background:#2f2f2f;"></div>
<div style="position:absolute;top:656.21px;font-family:'Liberation Sans', sans-serif;font-size:17px;line-height:17px;color:#2f2f2f;font-weight:normal;white-space:nowrap;left:-379px;width:1000px;text-align:center;">3</div>
<div style="position:absolute;left:156px;top:680px;width:7px;height:2px;background:#2f2f2f;"></div>
<div style="position:absolute;left:156px;top:697px;width:7px;height:2px;background:#2f2f2f;"></div>
<div style="position:absolute;left:156px;top:714px;width:7px;height:2px;background:#2f2f2f;"></div>
<div style="position:absolute;left:156px;top:731px;width:7px;height:2px;background:#2f2f2f;"></div>
<div style="position:absolute;left:150px;top:748px;width:13px;height:2px;background:#2f2f2f;"></div>
<div style="position:absolute;top:740.41px;font-family:'Liberation Sans', sans-serif;font-size:17px;line-height:17px;color:#2f2f2f;font-weight:normal;white-space:nowrap;left:-379px;width:1000px;text-align:center;">4</div>
<div style="position:absolute;left:156px;top:764px;width:7px;height:2px;background:#2f2f2f;"></div>
<div style="position:absolute;left:156px;top:781px;width:7px;height:2px;background:#2f2f2f;"></div>
<div style="position:absolute;left:156px;top:798px;width:7px;height:2px;background:#2f2f2f;"></div>
<div style="position:absolute;left:156px;top:815px;width:7px;height:2px;background:#2f2f2f;"></div>
<div style="position:absolute;left:150px;top:832px;width:13px;height:2px;background:#2f2f2f;"></div>
<div style="position:absolute;top:824.61px;font-family:'Liberation Sans', sans-serif;font-size:17px;line-height:17px;color:#2f2f2f;font-weight:normal;white-space:nowrap;left:-379px;width:1000px;text-align:center;">5</div>
<div style="position:absolute;left:156px;top:849px;width:7px;height:2px;background:#2f2f2f;"></div>
<div style="position:absolute;left:156px;top:865px;width:7px;height:2px;background:#2f2f2f;"></div>
<div style="position:absolute;left:156px;top:882px;width:7px;height:2px;background:#2f2f2f;"></div>
<div style="position:absolute;left:156px;top:899px;width:7px;height:2px;background:#2f2f2f;"></div>
<div style="position:absolute;left:150px;top:916px;width:13px;height:2px;background:#2f2f2f;"></div>
<div style="position:absolute;top:908.81px;font-family:'Liberation Sans', sans-serif;font-size:17px;line-height:17px;color:#2f2f2f;font-weight:normal;white-space:nowrap;left:-379px;width:1000px;text-align:center;">6</div>
<div style="position:absolute;left:156px;top:933px;width:7px;height:2px;background:#2f2f2f;"></div>
<div style="position:absolute;left:156px;top:950px;width:7px;height:2px;background:#2f2f2f;"></div>
<div style="position:absolute;left:156px;top:967px;width:7px;height:2px;background:#2f2f2f;"></div>
<div style="position:absolute;left:156px;top:983px;width:7px;height:2px;background:#2f2f2f;"></div>
<div style="position:absolute;left:150px;top:1000px;width:13px;height:2px;background:#2f2f2f;"></div>
<div style="position:absolute;top:993.01px;font-family:'Liberation Sans', sans-serif;font-size:17px;line-height:17px;color:#2f2f2f;font-weight:normal;white-space:nowrap;left:-379px;width:1000px;text-align:center;">7</div>
<div style="position:absolute;left:156px;top:1017px;width:7px;height:2px;background:#2f2f2f;"></div>
<div style="position:absolute;left:156px;top:1034px;width:7px;height:2px;background:#2f2f2f;"></div>
<div style="position:absolute;left:156px;top:1051px;width:7px;height:2px;background:#2f2f2f;"></div>
<div style="position:absolute;left:156px;top:1068px;width:7px;height:2px;background:#2f2f2f;"></div>
<div style="position:absolute;left:150px;top:1084px;width:13px;height:2px;background:#2f2f2f;"></div>
<div style="position:absolute;top:1077.21px;font-family:'Liberation Sans', sans-serif;font-size:17px;line-height:17px;color:#2f2f2f;font-weight:normal;white-space:nowrap;left:-379px;width:1000px;text-align:center;">8</div>
<div style="position:absolute;left:156px;top:1101px;width:7px;height:2px;background:#2f2f2f;"></div>
<div style="position:absolute;left:156px;top:1118px;width:7px;height:2px;background:#2f2f2f;"></div>
<div style="position:absolute;left:156px;top:1135px;width:7px;height:2px;background:#a3a3a3;"></div>
<div style="position:absolute;left:156px;top:1152px;width:7px;height:2px;background:#a3a3a3;"></div>
<div style="position:absolute;left:150px;top:1169px;width:13px;height:2px;background:#a3a3a3;"></div>
<div style="position:absolute;top:1161.41px;font-family:'Liberation Sans', sans-serif;font-size:17px;line-height:17px;color:#a3a3a3;font-weight:normal;white-space:nowrap;left:-379px;width:1000px;text-align:center;">9</div>
<div style="position:absolute;left:156px;top:1185px;width:7px;height:2px;background:#a3a3a3;"></div>
<div style="position:absolute;left:156px;top:1202px;width:7px;height:2px;background:#a3a3a3;"></div>
<div style="position:absolute;left:156px;top:1219px;width:7px;height:2px;background:#a3a3a3;"></div>
<div style="position:absolute;left:156px;top:1236px;width:7px;height:2px;background:#a3a3a3;"></div>
<div style="position:absolute;left:97px;top:769px;width:66px;height:2px;background:#404349;"></div>
<div style="position:absolute;left:97px;top:1241px;width:1539px;height:265px;background:#f2f2f2;"></div>
<div style="position:absolute;left:97px;top:1263px;width:1539px;height:1px;background:#ebebeb;"></div>
<div style="position:absolute;left:838px;top:1248px;width:62px;height:31px;background:#fff;border-radius:8px 8px 0 0;"></div>
<svg style="position:absolute;left:856px;top:1252px;" width="26" height="26" viewBox="0 0 26 26"><path d="M6.5,9 L13,3.5 L19.5,9 M6.5,16 L13,21.5 L19.5,16" fill="none" stroke="#4fa874" stroke-width="3.2" stroke-linecap="round" stroke-linejoin="round"/></svg>
<div style="position:absolute;left:580px;top:1286px;width:574px;height:78px;background:#fff;border-radius:39px;"></div>
<svg style="position:absolute;left:700px;top:1300px;" width="72" height="52" viewBox="0 0 72 52"><path d="M6,27 H20 M13,20 V34" stroke="#4fa874" stroke-width="3.6"/><ellipse cx="50" cy="10" rx="16" ry="6.5" fill="none" stroke="#4fa874" stroke-width="3.2"/><path d="M34,10 V40 a16,6.5 0 0 0 32,0 V10 M34,25 a16,6.5 0 0 0 32,0" fill="none" stroke="#4fa874" stroke-width="3.2"/></svg>
<div style="position:absolute;top:1313.55px;font-family:'Liberation Sans', sans-serif;font-size:26.4px;line-height:26.4px;color:#4fa874;font-weight:bold;white-space:nowrap;left:781.6px;">Thêm cơ sở dữ liệu</div>
<div style="position:absolute;left:1636px;top:304px;width:694px;height:1202px;background:#ffffff;"></div>
<div style="position:absolute;top:337.30px;font-family:'Liberation Sans', sans-serif;font-size:28px;line-height:28px;color:#4fa874;font-weight:bold;white-space:nowrap;left:1668px;">Thông tin tài liệu</div>
<div style="position:absolute;left:1638px;top:396px;width:283px;height:9px;background:#4fa874;"></div>
<div style="position:absolute;left:1921px;top:404px;width:409px;height:2px;background:#d9d9d9;"></div>
<div style="position:absolute;top:434.30px;font-family:'Liberation Sans', sans-serif;font-size:28px;line-height:28px;color:#9a9aa0;font-weight:bold;white-space:nowrap;left:1663px;">Thông tin tài liệu</div>
<div style="position:absolute;top:485.44px;font-family:'Liberation Sans', sans-serif;font-size:27px;line-height:27px;color:#2b2f36;font-weight:bold;white-space:nowrap;left:1663px;">Kích thước tập tin:</div>
<div style="position:absolute;top:523.99px;font-family:'Liberation Sans', sans-serif;font-size:26px;line-height:26px;color:#2b2f36;font-weight:normal;white-space:nowrap;left:1663px;">180Kb</div>
<div style="position:absolute;top:563.54px;font-family:'Liberation Sans', sans-serif;font-size:27px;line-height:27px;color:#2b2f36;font-weight:bold;white-space:nowrap;left:1663px;">Thư mục:</div>
<div style="position:absolute;top:603.49px;font-family:'Liberation Sans', sans-serif;font-size:26px;line-height:26px;color:#2b2f36;font-weight:normal;white-space:nowrap;left:1663px;">C:/Users/maclife/Downloads</div>
<div style="position:absolute;top:643.14px;font-family:'Liberation Sans', sans-serif;font-size:27px;line-height:27px;color:#2b2f36;font-weight:bold;white-space:nowrap;left:1663px;">Tên tập tin:</div>
<div style="position:absolute;top:681.79px;font-family:'Liberation Sans', sans-serif;font-size:26px;line-height:26px;color:#2b2f36;font-weight:normal;white-space:nowrap;left:1663px;">nv1.cardDocument</div>
<div style="position:absolute;top:721.14px;font-family:'Liberation Sans', sans-serif;font-size:27px;line-height:27px;color:#2b2f36;font-weight:bold;white-space:nowrap;left:1663px;">Ngày tạo:</div>
<div style="position:absolute;top:760.79px;font-family:'Liberation Sans', sans-serif;font-size:26px;line-height:26px;color:#2b2f36;font-weight:normal;white-space:nowrap;left:1663px;">Thu Dec 4 17:09:11 2025</div>
<div style="position:absolute;top:800.34px;font-family:'Liberation Sans', sans-serif;font-size:27px;line-height:27px;color:#2b2f36;font-weight:bold;white-space:nowrap;left:1663px;">Lần thay đổi gần nhất:</div>
<div style="position:absolute;top:839.69px;font-family:'Liberation Sans', sans-serif;font-size:26px;line-height:26px;color:#2b2f36;font-weight:normal;white-space:nowrap;left:1663px;">Thu Dec 4 17:09:12 2025</div>
<div style="position:absolute;top:879.64px;font-family:'Liberation Sans', sans-serif;font-size:27px;line-height:27px;color:#2b2f36;font-weight:bold;white-space:nowrap;left:1663px;">Thẻ mã hóa:</div>
<div style="position:absolute;top:919.39px;font-family:'Liberation Sans', sans-serif;font-size:26px;line-height:26px;color:#2b2f36;font-weight:normal;white-space:nowrap;left:1663px;">Không</div>
<div style="position:absolute;left:1638px;top:1047px;width:692px;height:4px;background:#d9d9d9;"></div>
<div style="position:absolute;top:1095.64px;font-family:'Liberation Sans', sans-serif;font-size:27px;line-height:27px;color:#9a9aa0;font-weight:bold;white-space:nowrap;left:1661px;">Lớp</div>
<div style="position:absolute;left:2130px;top:1073px;width:82px;height:67px;background:#fff;box-sizing:border-box;border:2px solid #cfcfcf;border-radius:14px;"></div>
<svg style="position:absolute;left:2151px;top:1086px;" width="40" height="40" viewBox="0 0 40 40"><path d="M20,4 V36 M4,20 H36" stroke="#2b2f36" stroke-width="5.5" stroke-linecap="round"/></svg>
<div style="position:absolute;left:2225px;top:1073px;width:82px;height:67px;background:#fff;box-sizing:border-box;border:2px solid #d8eee2;border-radius:14px;"></div>
<svg style="position:absolute;left:2246px;top:1086px;" width="40" height="40" viewBox="0 0 40 40"><path d="M8,20 a12,11 0 0 1 21,-8 M32,20 a12,11 0 0 1 -21,8" fill="none" stroke="#dcdcdc" stroke-width="4"/><path d="M24,13 L33,13 L33,5 Z M16,27 L7,27 L7,35 Z" fill="#dcdcdc"/></svg>
<svg style="position:absolute;left:1656px;top:1164px;" width="26" height="24" viewBox="0 0 26 24"><path d="M6,8 L13,15 L20,8" fill="none" stroke="#2b2f36" stroke-width="3" stroke-linecap="round" stroke-linejoin="round"/></svg>
<div style="position:absolute;top:1165.79px;font-family:'Liberation Sans', sans-serif;font-size:26px;line-height:26px;color:#2b2f36;font-weight:normal;white-space:nowrap;left:1689px;">Trước</div>
<svg style="position:absolute;left:1674px;top:1210px;" width="26" height="24" viewBox="0 0 26 24"><path d="M6,8 L13,15 L20,8" fill="none" stroke="#2b2f36" stroke-width="3" stroke-linecap="round" stroke-linejoin="round"/></svg>
<div style="position:absolute;top:1211.89px;font-family:'Liberation Sans', sans-serif;font-size:26px;line-height:26px;color:#2b2f36;font-weight:normal;white-space:nowrap;left:1707px;">Màu/Đen</div>
<div style="position:absolute;top:1259.88px;font-family:'Liberation Sans', sans-serif;font-size:25.3px;line-height:25.3px;color:#2b2f36;font-weight:normal;white-space:nowrap;left:1812px;">Counter1</div>
<svg style="position:absolute;left:1772px;top:1254.3px;" width="32" height="34" viewBox="0 0 32 34"><path d="M4,2 H28 V10 H26.5 L25,6 H18 V27.5 L21,29 V31 H11 V29 L14,27.5 V6 H7 L5.5,10 H4 Z" fill="none" stroke="#2b2f36" stroke-width="1.8" stroke-linejoin="round"/></svg>
<div style="position:absolute;top:1307.28px;font-family:'Liberation Sans', sans-serif;font-size:25.3px;line-height:25.3px;color:#2b2f36;font-weight:normal;white-space:nowrap;left:1812px;">Text4</div>
<svg style="position:absolute;left:1772px;top:1301.7px;" width="32" height="34" viewBox="0 0 32 34"><path d="M4,2 H28 V10 H26.5 L25,6 H18 V27.5 L21,29 V31 H11 V29 L14,27.5 V6 H7 L5.5,10 H4 Z" fill="none" stroke="#2b2f36" stroke-width="1.8" stroke-linejoin="round"/></svg>
<div style="position:absolute;top:1356.28px;font-family:'Liberation Sans', sans-serif;font-size:25.3px;line-height:25.3px;color:#2b2f36;font-weight:normal;white-space:nowrap;left:1812px;">Text3</div>
<svg style="position:absolute;left:1772px;top:1350.7px;" width="32" height="34" viewBox="0 0 32 34"><path d="M4,2 H28 V10 H26.5 L25,6 H18 V27.5 L21,29 V31 H11 V29 L14,27.5 V6 H7 L5.5,10 H4 Z" fill="none" stroke="#2b2f36" stroke-width="1.8" stroke-linejoin="round"/></svg>
<div style="position:absolute;top:1403.58px;font-family:'Liberation Sans', sans-serif;font-size:25.3px;line-height:25.3px;color:#2b2f36;font-weight:normal;white-space:nowrap;left:1812px;">2DBarcode1</div>
<svg style="position:absolute;left:1770px;top:1397px;" width="34" height="34" viewBox="0 0 34 34"><rect x="2.8" y="2.8" width="7.4" height="7.4" fill="none" stroke="#2b2f36" stroke-width="1.6"/><rect x="5" y="5" width="3" height="3" fill="#2b2f36"/><rect x="21.8" y="2.8" width="7.4" height="7.4" fill="none" stroke="#2b2f36" stroke-width="1.6"/><rect x="24" y="5" width="3" height="3" fill="#2b2f36"/><rect x="2.8" y="21.8" width="7.4" height="7.4" fill="none" stroke="#2b2f36" stroke-width="1.6"/><rect x="5" y="24" width="3" height="3" fill="#2b2f36"/><rect x="11.5" y="2.0" width="1.9" height="1.9" fill="#2b2f36"/><rect x="15.3" y="2.0" width="1.9" height="1.9" fill="#2b2f36"/><rect x="21.0" y="2.0" width="1.9" height="1.9" fill="#2b2f36"/><rect x="11.5" y="3.9" width="1.9" height="1.9" fill="#2b2f36"/><rect x="15.3" y="3.9" width="1.9" height="1.9" fill="#2b2f36"/><rect x="17.2" y="3.9" width="1.9" height="1.9" fill="#2b2f36"/><rect x="17.2" y="5.8" width="1.9" height="1.9" fill="#2b2f36"/><rect x="17.2" y="7.7" width="1.9" height="1.9" fill="#2b2f36"/><rect x="11.5" y="9.6" width="1.9" height="1.9" fill="#2b2f36"/><rect x="13.4" y="9.6" width="1.9" height="1.9" fill="#2b2f36"/><rect x="5.8" y="11.5" width="1.9" height="1.9" fill="#2b2f36"/><rect x="9.6" y="11.5" width="1.9" height="1.9" fill="#2b2f36"/><rect x="15.3" y="11.5" width="1.9" height="1.9" fill="#2b2f36"/><rect x="17.2" y="11.5" width="1.9" height="1.9" fill="#2b2f36"/><rect x="19.1" y="11.5" width="1.9" height="1.9" fill="#2b2f36"/><rect x="22.9" y="11.5" width="1.9" height="1.9" fill="#2b2f36"/><rect x="26.7" y="11.5" width="1.9" height="1.9" fill="#2b2f36"/><rect x="30.5" y="11.5" width="1.9" height="1.9" fill="#2b2f36"/><rect x="2.0" y="13.4" width="1.9" height="1.9" fill="#2b2f36"/><rect x="19.1" y="13.4" width="1.9" height="1.9" fill="#2b2f36"/><rect x="30.5" y="13.4" width="1.9" height="1.9" fill="#2b2f36"/><rect x="5.8" y="15.3" width="1.9" height="1.9" fill="#2b2f36"/><rect x="7.7" y="15.3" width="1.9" height="1.9" fill="#2b2f36"/><rect x="13.4" y="15.3" width="1.9" height="1.9" fill="#2b2f36"/><rect x="17.2" y="15.3" width="1.9" height="1.9" fill="#2b2f36"/><rect x="19.1" y="15.3" width="1.9" height="1.9" fill="#2b2f36"/><rect x="21.0" y="15.3" width="1.9" height="1.9" fill="#2b2f36"/><rect x="26.7" y="15.3" width="1.9" height="1.9" fill="#2b2f36"/><rect x="30.5" y="15.3" width="1.9" height="1.9" fill="#2b2f36"/><rect x="3.9" y="17.2" width="1.9" height="1.9" fill="#2b2f36"/><rect x="13.4" y="17.2" width="1.9" height="1.9" fill="#2b2f36"/><rect x="15.3" y="17.2" width="1.9" height="1.9" fill="#2b2f36"/><rect x="19.1" y="17.2" width="1.9" height="1.9" fill="#2b2f36"/><rect x="21.0" y="17.2" width="1.9" height="1.9" fill="#2b2f36"/><rect x="22.9" y="17.2" width="1.9" height="1.9" fill="#2b2f36"/><rect x="26.7" y="17.2" width="1.9" height="1.9" fill="#2b2f36"/><rect x="28.6" y="17.2" width="1.9" height="1.9" fill="#2b2f36"/><rect x="2.0" y="19.1" width="1.9" height="1.9" fill="#2b2f36"/><rect x="7.7" y="19.1" width="1.9" height="1.9" fill="#2b2f36"/><rect x="24.8" y="19.1" width="1.9" height="1.9" fill="#2b2f36"/><rect x="28.6" y="19.1" width="1.9" height="1.9" fill="#2b2f36"/><rect x="30.5" y="19.1" width="1.9" height="1.9" fill="#2b2f36"/><rect x="7.7" y="21.0" width="1.9" height="1.9" fill="#2b2f36"/><rect x="9.6" y="21.0" width="1.9" height="1.9" fill="#2b2f36"/><rect x="13.4" y="21.0" width="1.9" height="1.9" fill="#2b2f36"/><rect x="19.1" y="21.0" width="1.9" height="1.9" fill="#2b2f36"/><rect x="26.7" y="21.0" width="1.9" height="1.9" fill="#2b2f36"/><rect x="11.5" y="22.9" width="1.9" height="1.9" fill="#2b2f36"/><rect x="13.4" y="22.9" width="1.9" height="1.9" fill="#2b2f36"/><rect x="19.1" y="22.9" width="1.9" height="1.9" fill="#2b2f36"/><rect x="24.8" y="22.9" width="1.9" height="1.9" fill="#2b2f36"/><rect x="26.7" y="22.9" width="1.9" height="1.9" fill="#2b2f36"/><rect x="28.6" y="22.9" width="1.9" height="1.9" fill="#2b2f36"/><rect x="30.5" y="22.9" width="1.9" height="1.9" fill="#2b2f36"/><rect x="13.4" y="24.8" width="1.9" height="1.9" fill="#2b2f36"/><rect x="15.3" y="24.8" width="1.9" height="1.9" fill="#2b2f36"/><rect x="19.1" y="24.8" width="1.9" height="1.9" fill="#2b2f36"/><rect x="24.8" y="24.8" width="1.9" height="1.9" fill="#2b2f36"/><rect x="26.7" y="24.8" width="1.9" height="1.9" fill="#2b2f36"/><rect x="30.5" y="24.8" width="1.9" height="1.9" fill="#2b2f36"/><rect x="11.5" y="26.7" width="1.9" height="1.9" fill="#2b2f36"/><rect x="13.4" y="26.7" width="1.9" height="1.9" fill="#2b2f36"/><rect x="17.2" y="26.7" width="1.9" height="1.9" fill="#2b2f36"/><rect x="19.1" y="26.7" width="1.9" height="1.9" fill="#2b2f36"/><rect x="21.0" y="26.7" width="1.9" height="1.9" fill="#2b2f36"/><rect x="24.8" y="26.7" width="1.9" height="1.9" fill="#2b2f36"/><rect x="28.6" y="26.7" width="1.9" height="1.9" fill="#2b2f36"/><rect x="30.5" y="26.7" width="1.9" height="1.9" fill="#2b2f36"/><rect x="17.2" y="28.6" width="1.9" height="1.9" fill="#2b2f36"/><rect x="19.1" y="28.6" width="1.9" height="1.9" fill="#2b2f36"/><rect x="22.9" y="28.6" width="1.9" height="1.9" fill="#2b2f36"/><rect x="28.6" y="28.6" width="1.9" height="1.9" fill="#2b2f36"/><rect x="30.5" y="28.6" width="1.9" height="1.9" fill="#2b2f36"/><rect x="17.2" y="30.5" width="1.9" height="1.9" fill="#2b2f36"/><rect x="19.1" y="30.5" width="1.9" height="1.9" fill="#2b2f36"/><rect x="21.0" y="30.5" width="1.9" height="1.9" fill="#2b2f36"/><rect x="24.8" y="30.5" width="1.9" height="1.9" fill="#2b2f36"/><rect x="26.7" y="30.5" width="1.9" height="1.9" fill="#2b2f36"/><rect x="28.6" y="30.5" width="1.9" height="1.9" fill="#2b2f36"/><rect x="30.5" y="30.5" width="1.9" height="1.9" fill="#2b2f36"/></svg>
<div style="position:absolute;top:1452.58px;font-family:'Liberation Sans', sans-serif;font-size:25.3px;line-height:25.3px;color:#2b2f36;font-weight:normal;white-space:nowrap;left:1812px;">Text2</div>
<svg style="position:absolute;left:1772px;top:1447px;" width="32" height="34" viewBox="0 0 32 34"><path d="M4,2 H28 V10 H26.5 L25,6 H18 V27.5 L21,29 V31 H11 V29 L14,27.5 V6 H7 L5.5,10 H4 Z" fill="none" stroke="#2b2f36" stroke-width="1.8" stroke-linejoin="round"/></svg>
<svg style="position:absolute;left:1772px;top:1495px;" width="32" height="34" viewBox="0 0 32 34"><path d="M4,2 H28 V10 H26.5 L25,6 H18 V27.5 L21,29 V31 H11 V29 L14,27.5 V6 H7 L5.5,10 H4 Z" fill="none" stroke="#2b2f36" stroke-width="1.8" stroke-linejoin="round"/></svg>
<div style="position:absolute;left:2287px;top:1154px;width:31px;height:343px;background:#d3d3d6;border-radius:15px;"></div>
<div style="position:absolute;left:2293.5px;top:1159.5px;width:18px;height:229px;background:#4fa874;border-radius:9px;"></div>
<!--CARDS-->
<svg style="position:absolute;left:388px;top:397px;" width="458" height="778" viewBox="0 0 458 778"><rect x="0" y="0" width="458" height="778" fill="#484b9c"/><path d="M214,0 H458 V416 H176 V229 A55,55 0 0 1 231,174 H320 A60,60 0 0 0 320,54 H265 A51,54 0 0 1 214,0 Z" fill="#f4bf6d"/><rect x="0" y="295" width="90" height="483" fill="#2b306c"/><path d="M0,416 H219 A60,60 0 0 1 219,536 H0 Z" fill="#2b306c"/><path d="M0,656.5 H161.3 A61.5,61.5 0 0 1 161.3,779.5 H0 Z" fill="#2b306c"/><path d="M86,295 H297 A60.5,60.5 0 0 1 297,416 H86 A60.5,60.5 0 0 1 86,295 Z" fill="#484b9c"/><path d="M86,536.5 H458 V656.5 H86 A60,60 0 0 1 86,536.5 Z" fill="#484b9c"/><rect x="70" y="82" width="70" height="70" fill="#c08843"/><rect x="85.40" y="85.15" width="9.10" height="9.10" fill="#e9c08d"/><rect x="85.40" y="139.75" width="9.10" height="9.10" fill="#e9c08d"/><rect x="73.15" y="97.40" width="9.10" height="9.10" fill="#e9c08d"/><rect x="127.75" y="97.40" width="9.10" height="9.10" fill="#e9c08d"/><rect x="100.45" y="85.15" width="9.10" height="9.10" fill="#e9c08d"/><rect x="100.45" y="139.75" width="9.10" height="9.10" fill="#e9c08d"/><rect x="73.15" y="112.45" width="9.10" height="9.10" fill="#e9c08d"/><rect x="127.75" y="112.45" width="9.10" height="9.10" fill="#e9c08d"/><rect x="115.50" y="85.15" width="9.10" height="9.10" fill="#e9c08d"/><rect x="115.50" y="139.75" width="9.10" height="9.10" fill="#e9c08d"/><rect x="73.15" y="127.50" width="9.10" height="9.10" fill="#e9c08d"/><rect x="127.75" y="127.50" width="9.10" height="9.10" fill="#e9c08d"/><circle cx="64.7" cy="574.1" r="3.1" fill="#f4bf6d"/><circle cx="79.7" cy="574.1" r="3.1" fill="#f4bf6d"/><circle cx="94.6" cy="574.1" r="3.1" fill="#f4bf6d"/><circle cx="64.7" cy="589.4" r="3.1" fill="#f4bf6d"/><circle cx="79.7" cy="589.4" r="3.1" fill="#f4bf6d"/><circle cx="94.6" cy="589.4" r="3.1" fill="#f4bf6d"/><circle cx="109.6" cy="589.4" r="3.1" fill="#f4bf6d"/><circle cx="64.7" cy="604.9" r="3.1" fill="#f4bf6d"/><circle cx="79.7" cy="604.9" r="3.1" fill="#f4bf6d"/><circle cx="94.6" cy="604.9" r="3.1" fill="#f4bf6d"/><circle cx="109.6" cy="604.9" r="3.1" fill="#f4bf6d"/><circle cx="124.9" cy="604.9" r="3.1" fill="#f4bf6d"/><circle cx="64.7" cy="620.4" r="3.1" fill="#f4bf6d"/><circle cx="79.7" cy="620.4" r="3.1" fill="#f4bf6d"/><circle cx="94.6" cy="620.4" r="3.1" fill="#f4bf6d"/><circle cx="109.6" cy="620.4" r="3.1" fill="#f4bf6d"/><circle cx="124.9" cy="620.4" r="3.1" fill="#f4bf6d"/><circle cx="140.1" cy="620.4" r="3.1" fill="#f4bf6d"/><circle cx="64.7" cy="635.7" r="3.1" fill="#f4bf6d"/><circle cx="79.7" cy="635.7" r="3.1" fill="#f4bf6d"/><circle cx="94.6" cy="635.7" r="3.1" fill="#f4bf6d"/><circle cx="109.6" cy="635.7" r="3.1" fill="#f4bf6d"/><circle cx="124.9" cy="635.7" r="3.1" fill="#f4bf6d"/><circle cx="140.1" cy="635.7" r="3.1" fill="#f4bf6d"/><circle cx="64.7" cy="651.2" r="3.1" fill="#f4bf6d"/><circle cx="79.7" cy="651.2" r="3.1" fill="#f4bf6d"/><circle cx="94.6" cy="651.2" r="3.1" fill="#f4bf6d"/><circle cx="109.6" cy="651.2" r="3.1" fill="#f4bf6d"/><circle cx="124.9" cy="651.2" r="3.1" fill="#f4bf6d"/><circle cx="140.1" cy="651.2" r="3.1" fill="#f4bf6d"/><circle cx="64.7" cy="667.0" r="3.1" fill="#f4bf6d"/><circle cx="79.7" cy="667.0" r="3.1" fill="#f4bf6d"/><circle cx="94.6" cy="667.0" r="3.1" fill="#f4bf6d"/><circle cx="109.6" cy="667.0" r="3.1" fill="#f4bf6d"/><circle cx="124.9" cy="667.0" r="3.1" fill="#f4bf6d"/><circle cx="140.1" cy="667.0" r="3.1" fill="#f4bf6d"/><circle cx="79.7" cy="682.5" r="3.1" fill="#f4bf6d"/><circle cx="94.6" cy="682.5" r="3.1" fill="#f4bf6d"/><circle cx="109.6" cy="682.5" r="3.1" fill="#f4bf6d"/><circle cx="124.9" cy="682.5" r="3.1" fill="#f4bf6d"/><circle cx="140.1" cy="682.5" r="3.1" fill="#f4bf6d"/><circle cx="94.6" cy="698.0" r="3.1" fill="#f4bf6d"/><circle cx="109.6" cy="698.0" r="3.1" fill="#f4bf6d"/><circle cx="124.9" cy="698.0" r="3.1" fill="#f4bf6d"/><circle cx="140.1" cy="698.0" r="3.1" fill="#f4bf6d"/><circle cx="109.6" cy="713.0" r="3.1" fill="#f4bf6d"/><circle cx="124.9" cy="713.0" r="3.1" fill="#f4bf6d"/><circle cx="140.1" cy="713.0" r="3.1" fill="#f4bf6d"/><circle cx="227.5" cy="316" r="95.5" fill="#c08843"/><circle cx="227.5" cy="316" r="93" fill="#fff"/><defs><linearGradient id="bg" x1="0" y1="0" x2="1" y2="0.3"><stop offset="0" stop-color="#6b6c71"/><stop offset="0.6" stop-color="#7e7f84"/><stop offset="1" stop-color="#85868b"/></linearGradient><clipPath id="pc"><circle cx="227.5" cy="316" r="88.5"/></clipPath><radialGradient id="face" cx="0.5" cy="0.35" r="0.65"><stop offset="0" stop-color="#4e372c"/><stop offset="0.6" stop-color="#3a2921"/><stop offset="1" stop-color="#2a1d18"/></radialGradient><linearGradient id="shirt" x1="0" y1="0" x2="0" y2="1"><stop offset="0" stop-color="#c3daf0"/><stop offset="1" stop-color="#d3e5f5"/></linearGradient></defs><g clip-path="url(#pc)"><rect x="132.5" y="221" width="190" height="190" fill="url(#bg)"/><path d="M120,386 L182,347 C195,338 203,330 207,324 L232,362.7 L247,324 C255,328 268,332 277,334 C295,340 310,352 322,366 L340,440 L110,440 Z" fill="url(#shirt)"/><path d="M150,372 C162,386 170,404 174,430 L166,430 C163,406 156,390 146,376 Z" fill="#9dbcdb" opacity="0.7"/><path d="M200,296 L203,318 L207,332 L232,362 L248,330 L247,312 Z" fill="#2b1e19"/><path d="M205,341 L212,340 L233,361 L219,360 Z" fill="#6f9fd0"/><path d="M262,343 L254,341 L234,361 L249,360 Z" fill="#6f9fd0"/><path d="M232,363 V430" stroke="#b3cde6" stroke-width="1"/><ellipse cx="198" cy="294" rx="4" ry="9" fill="#1e1512"/><ellipse cx="258.5" cy="292" rx="3.8" ry="9" fill="#3b2921"/><path d="M202,264 H257 C258,282 257,300 253,313 C249,325 240,334 230,334 C220,334 212,326 208,314 C204,300 202,282 202,264 Z" fill="url(#face)"/><ellipse cx="207" cy="300" rx="7" ry="26" fill="#1a120f" opacity="0.55"/><ellipse cx="234" cy="276" rx="13" ry="7" fill="#634638" opacity="0.6"/><ellipse cx="231" cy="299" rx="5.5" ry="9" fill="#65483a" opacity="0.75"/><ellipse cx="248" cy="300" rx="5" ry="9" fill="#553c30" opacity="0.4"/><path d="M214,321 C220,334 240,334 246,321 L247,326 C242,337 218,337 212,326 Z" fill="#17100e" opacity="0.7"/><ellipse cx="231" cy="317.5" rx="10" ry="3" fill="#4d352c"/><path d="M221,315.3 Q231,313.5 241,315.3" stroke="#140e0c" stroke-width="1.6" fill="none"/><path d="M219,307 Q231,302 243,307" stroke="#1c1411" stroke-width="2.2" fill="none" opacity="0.6"/><ellipse cx="215.2" cy="290.6" rx="4.5" ry="2.1" fill="#0e0a09"/><ellipse cx="243.6" cy="290.6" rx="4.5" ry="2.1" fill="#0e0a09"/><path d="M207,285 Q215,282 223,285 M236,285 Q244,282 252,285" stroke="#120d0b" stroke-width="2.2" fill="none"/><path d="M196,300 L195.5,262 C195,250 198,241 207,238 C218,235 240,234 250,237 C257,240 259,250 258.5,262 L258,284 L255,282 L254,272 C252,269 248,266 243,266 L212,266 C206,267 203,271 202.5,276 L201.5,300 Z" fill="#14100e"/><circle cx="205" cy="238" r="2.2" fill="#14100e"/><circle cx="214" cy="236" r="2.2" fill="#14100e"/><circle cx="224" cy="235" r="2.2" fill="#14100e"/><circle cx="234" cy="235" r="2.2" fill="#14100e"/><circle cx="244" cy="236" r="2.2" fill="#14100e"/><circle cx="252" cy="239" r="2.2" fill="#14100e"/><circle cx="198" cy="246" r="2.2" fill="#14100e"/><circle cx="257" cy="247" r="2.2" fill="#14100e"/></g><path d="M196.00,546.80h3.04v3.04h-3.04zM198.84,546.80h3.04v3.04h-3.04zM201.68,546.80h3.04v3.04h-3.04zM204.52,546.80h3.04v3.04h-3.04zM207.36,546.80h3.04v3.04h-3.04zM210.20,546.80h3.04v3.04h-3.04zM213.04,546.80h3.04v3.04h-3.04zM221.56,546.80h3.04v3.04h-3.04zM224.40,546.80h3.04v3.04h-3.04zM227.24,546.80h3.04v3.04h-3.04zM230.08,546.80h3.04v3.04h-3.04zM235.76,546.80h3.04v3.04h-3.04zM238.60,546.80h3.04v3.04h-3.04zM241.44,546.80h3.04v3.04h-3.04zM244.28,546.80h3.04v3.04h-3.04zM247.12,546.80h3.04v3.04h-3.04zM249.96,546.80h3.04v3.04h-3.04zM252.80,546.80h3.04v3.04h-3.04zM196.00,549.64h3.04v3.04h-3.04zM213.04,549.64h3.04v3.04h-3.04zM221.56,549.64h3.04v3.04h-3.04zM224.40,549.64h3.04v3.04h-3.04zM227.24,549.64h3.04v3.04h-3.04zM235.76,549.64h3.04v3.04h-3.04zM252.80,549.64h3.04v3.04h-3.04zM196.00,552.48h3.04v3.04h-3.04zM201.68,552.48h3.04v3.04h-3.04zM204.52,552.48h3.04v3.04h-3.04zM207.36,552.48h3.04v3.04h-3.04zM213.04,552.48h3.04v3.04h-3.04zM218.72,552.48h3.04v3.04h-3.04zM221.56,552.48h3.04v3.04h-3.04zM227.24,552.48h3.04v3.04h-3.04zM230.08,552.48h3.04v3.04h-3.04zM235.76,552.48h3.04v3.04h-3.04zM241.44,552.48h3.04v3.04h-3.04zM244.28,552.48h3.04v3.04h-3.04zM247.12,552.48h3.04v3.04h-3.04zM252.80,552.48h3.04v3.04h-3.04zM196.00,555.32h3.04v3.04h-3.04zM201.68,555.32h3.04v3.04h-3.04zM204.52,555.32h3.04v3.04h-3.04zM207.36,555.32h3.04v3.04h-3.04zM213.04,555.32h3.04v3.04h-3.04zM218.72,555.32h3.04v3.04h-3.04zM221.56,555.32h3.04v3.04h-3.04zM224.40,555.32h3.04v3.04h-3.04zM235.76,555.32h3.04v3.04h-3.04zM241.44,555.32h3.04v3.04h-3.04zM244.28,555.32h3.04v3.04h-3.04zM247.12,555.32h3.04v3.04h-3.04zM252.80,555.32h3.04v3.04h-3.04zM196.00,558.16h3.04v3.04h-3.04zM201.68,558.16h3.04v3.04h-3.04zM204.52,558.16h3.04v3.04h-3.04zM207.36,558.16h3.04v3.04h-3.04zM213.04,558.16h3.04v3.04h-3.04zM218.72,558.16h3.04v3.04h-3.04zM230.08,558.16h3.04v3.04h-3.04zM235.76,558.16h3.04v3.04h-3.04zM241.44,558.16h3.04v3.04h-3.04zM244.28,558.16h3.04v3.04h-3.04zM247.12,558.16h3.04v3.04h-3.04zM252.80,558.16h3.04v3.04h-3.04zM196.00,561.00h3.04v3.04h-3.04zM213.04,561.00h3.04v3.04h-3.04zM218.72,561.00h3.04v3.04h-3.04zM221.56,561.00h3.04v3.04h-3.04zM227.24,561.00h3.04v3.04h-3.04zM235.76,561.00h3.04v3.04h-3.04zM252.80,561.00h3.04v3.04h-3.04zM196.00,563.84h3.04v3.04h-3.04zM198.84,563.84h3.04v3.04h-3.04zM201.68,563.84h3.04v3.04h-3.04zM204.52,563.84h3.04v3.04h-3.04zM207.36,563.84h3.04v3.04h-3.04zM210.20,563.84h3.04v3.04h-3.04zM213.04,563.84h3.04v3.04h-3.04zM218.72,563.84h3.04v3.04h-3.04zM224.40,563.84h3.04v3.04h-3.04zM230.08,563.84h3.04v3.04h-3.04zM235.76,563.84h3.04v3.04h-3.04zM238.60,563.84h3.04v3.04h-3.04zM241.44,563.84h3.04v3.04h-3.04zM244.28,563.84h3.04v3.04h-3.04zM247.12,563.84h3.04v3.04h-3.04zM249.96,563.84h3.04v3.04h-3.04zM252.80,563.84h3.04v3.04h-3.04zM218.72,566.68h3.04v3.04h-3.04zM221.56,566.68h3.04v3.04h-3.04zM196.00,569.52h3.04v3.04h-3.04zM201.68,569.52h3.04v3.04h-3.04zM204.52,569.52h3.04v3.04h-3.04zM207.36,569.52h3.04v3.04h-3.04zM210.20,569.52h3.04v3.04h-3.04zM213.04,569.52h3.04v3.04h-3.04zM224.40,569.52h3.04v3.04h-3.04zM227.24,569.52h3.04v3.04h-3.04zM235.76,569.52h3.04v3.04h-3.04zM238.60,569.52h3.04v3.04h-3.04zM241.44,569.52h3.04v3.04h-3.04zM244.28,569.52h3.04v3.04h-3.04zM247.12,569.52h3.04v3.04h-3.04zM198.84,572.36h3.04v3.04h-3.04zM207.36,572.36h3.04v3.04h-3.04zM210.20,572.36h3.04v3.04h-3.04zM215.88,572.36h3.04v3.04h-3.04zM224.40,572.36h3.04v3.04h-3.04zM227.24,572.36h3.04v3.04h-3.04zM230.08,572.36h3.04v3.04h-3.04zM232.92,572.36h3.04v3.04h-3.04zM235.76,572.36h3.04v3.04h-3.04zM244.28,572.36h3.04v3.04h-3.04zM247.12,572.36h3.04v3.04h-3.04zM252.80,572.36h3.04v3.04h-3.04zM196.00,575.20h3.04v3.04h-3.04zM198.84,575.20h3.04v3.04h-3.04zM201.68,575.20h3.04v3.04h-3.04zM204.52,575.20h3.04v3.04h-3.04zM210.20,575.20h3.04v3.04h-3.04zM213.04,575.20h3.04v3.04h-3.04zM224.40,575.20h3.04v3.04h-3.04zM227.24,575.20h3.04v3.04h-3.04zM230.08,575.20h3.04v3.04h-3.04zM235.76,575.20h3.04v3.04h-3.04zM238.60,575.20h3.04v3.04h-3.04zM244.28,575.20h3.04v3.04h-3.04zM249.96,575.20h3.04v3.04h-3.04zM198.84,578.04h3.04v3.04h-3.04zM201.68,578.04h3.04v3.04h-3.04zM204.52,578.04h3.04v3.04h-3.04zM215.88,578.04h3.04v3.04h-3.04zM224.40,578.04h3.04v3.04h-3.04zM227.24,578.04h3.04v3.04h-3.04zM230.08,578.04h3.04v3.04h-3.04zM232.92,578.04h3.04v3.04h-3.04zM235.76,578.04h3.04v3.04h-3.04zM244.28,578.04h3.04v3.04h-3.04zM249.96,578.04h3.04v3.04h-3.04zM252.80,578.04h3.04v3.04h-3.04zM201.68,580.88h3.04v3.04h-3.04zM204.52,580.88h3.04v3.04h-3.04zM210.20,580.88h3.04v3.04h-3.04zM213.04,580.88h3.04v3.04h-3.04zM215.88,580.88h3.04v3.04h-3.04zM224.40,580.88h3.04v3.04h-3.04zM230.08,580.88h3.04v3.04h-3.04zM238.60,580.88h3.04v3.04h-3.04zM249.96,580.88h3.04v3.04h-3.04zM252.80,580.88h3.04v3.04h-3.04zM218.72,583.72h3.04v3.04h-3.04zM224.40,583.72h3.04v3.04h-3.04zM230.08,583.72h3.04v3.04h-3.04zM238.60,583.72h3.04v3.04h-3.04zM244.28,583.72h3.04v3.04h-3.04zM196.00,586.56h3.04v3.04h-3.04zM198.84,586.56h3.04v3.04h-3.04zM201.68,586.56h3.04v3.04h-3.04zM204.52,586.56h3.04v3.04h-3.04zM207.36,586.56h3.04v3.04h-3.04zM210.20,586.56h3.04v3.04h-3.04zM213.04,586.56h3.04v3.04h-3.04zM221.56,586.56h3.04v3.04h-3.04zM227.24,586.56h3.04v3.04h-3.04zM232.92,586.56h3.04v3.04h-3.04zM241.44,586.56h3.04v3.04h-3.04zM249.96,586.56h3.04v3.04h-3.04zM196.00,589.40h3.04v3.04h-3.04zM213.04,589.40h3.04v3.04h-3.04zM218.72,589.40h3.04v3.04h-3.04zM221.56,589.40h3.04v3.04h-3.04zM224.40,589.40h3.04v3.04h-3.04zM238.60,589.40h3.04v3.04h-3.04zM241.44,589.40h3.04v3.04h-3.04zM244.28,589.40h3.04v3.04h-3.04zM249.96,589.40h3.04v3.04h-3.04zM252.80,589.40h3.04v3.04h-3.04zM196.00,592.24h3.04v3.04h-3.04zM201.68,592.24h3.04v3.04h-3.04zM204.52,592.24h3.04v3.04h-3.04zM207.36,592.24h3.04v3.04h-3.04zM213.04,592.24h3.04v3.04h-3.04zM218.72,592.24h3.04v3.04h-3.04zM221.56,592.24h3.04v3.04h-3.04zM224.40,592.24h3.04v3.04h-3.04zM227.24,592.24h3.04v3.04h-3.04zM232.92,592.24h3.04v3.04h-3.04zM241.44,592.24h3.04v3.04h-3.04zM196.00,595.08h3.04v3.04h-3.04zM201.68,595.08h3.04v3.04h-3.04zM204.52,595.08h3.04v3.04h-3.04zM207.36,595.08h3.04v3.04h-3.04zM213.04,595.08h3.04v3.04h-3.04zM218.72,595.08h3.04v3.04h-3.04zM227.24,595.08h3.04v3.04h-3.04zM230.08,595.08h3.04v3.04h-3.04zM232.92,595.08h3.04v3.04h-3.04zM235.76,595.08h3.04v3.04h-3.04zM238.60,595.08h3.04v3.04h-3.04zM244.28,595.08h3.04v3.04h-3.04zM196.00,597.92h3.04v3.04h-3.04zM201.68,597.92h3.04v3.04h-3.04zM204.52,597.92h3.04v3.04h-3.04zM207.36,597.92h3.04v3.04h-3.04zM213.04,597.92h3.04v3.04h-3.04zM218.72,597.92h3.04v3.04h-3.04zM230.08,597.92h3.04v3.04h-3.04zM235.76,597.92h3.04v3.04h-3.04zM238.60,597.92h3.04v3.04h-3.04zM244.28,597.92h3.04v3.04h-3.04zM196.00,600.76h3.04v3.04h-3.04zM213.04,600.76h3.04v3.04h-3.04zM221.56,600.76h3.04v3.04h-3.04zM227.24,600.76h3.04v3.04h-3.04zM230.08,600.76h3.04v3.04h-3.04zM232.92,600.76h3.04v3.04h-3.04zM235.76,600.76h3.04v3.04h-3.04zM238.60,600.76h3.04v3.04h-3.04zM244.28,600.76h3.04v3.04h-3.04zM252.80,600.76h3.04v3.04h-3.04zM196.00,603.60h3.04v3.04h-3.04zM198.84,603.60h3.04v3.04h-3.04zM201.68,603.60h3.04v3.04h-3.04zM204.52,603.60h3.04v3.04h-3.04zM207.36,603.60h3.04v3.04h-3.04zM210.20,603.60h3.04v3.04h-3.04zM213.04,603.60h3.04v3.04h-3.04zM218.72,603.60h3.04v3.04h-3.04zM224.40,603.60h3.04v3.04h-3.04zM230.08,603.60h3.04v3.04h-3.04zM238.60,603.60h3.04v3.04h-3.04zM247.12,603.60h3.04v3.04h-3.04z" fill="#000"/></svg>
<div style="position:absolute;top:493.81px;font-family:'Liberation Serif', serif;font-size:37px;line-height:37px;color:#c08843;font-weight:bold;white-space:nowrap;left:549px;">The Company</div>
<svg style="position:absolute;left:388px;top:397px;" width="458" height="200" viewBox="0 0 458 200"><circle cx="321.4" cy="69.7" r="2.8" fill="#292e6a"/><circle cx="335.1" cy="69.7" r="2.8" fill="#292e6a"/><circle cx="348.8" cy="69.7" r="2.8" fill="#292e6a"/><circle cx="362.5" cy="69.7" r="2.8" fill="#292e6a"/><circle cx="376.2" cy="69.7" r="2.8" fill="#292e6a"/><circle cx="389.8" cy="69.7" r="2.8" fill="#292e6a"/><circle cx="403.5" cy="69.7" r="2.8" fill="#292e6a"/><circle cx="307.8" cy="82.8" r="2.8" fill="#292e6a"/><circle cx="321.4" cy="82.8" r="2.8" fill="#292e6a"/><circle cx="335.1" cy="82.8" r="2.8" fill="#292e6a"/><circle cx="348.8" cy="82.8" r="2.8" fill="#292e6a"/><circle cx="362.5" cy="82.8" r="2.8" fill="#292e6a"/><circle cx="376.2" cy="82.8" r="2.8" fill="#292e6a"/><circle cx="389.8" cy="82.8" r="2.8" fill="#292e6a"/><circle cx="403.5" cy="82.8" r="2.8" fill="#292e6a"/><circle cx="294.1" cy="96.5" r="2.8" fill="#292e6a"/><circle cx="307.8" cy="96.5" r="2.8" fill="#292e6a"/><circle cx="321.4" cy="96.5" r="2.8" fill="#292e6a"/><circle cx="335.1" cy="96.5" r="2.8" fill="#292e6a"/><circle cx="348.8" cy="96.5" r="2.8" fill="#292e6a"/><circle cx="362.5" cy="96.5" r="2.8" fill="#292e6a"/><circle cx="376.2" cy="96.5" r="2.8" fill="#292e6a"/><circle cx="389.8" cy="96.5" r="2.8" fill="#292e6a"/><circle cx="403.5" cy="96.5" r="2.8" fill="#292e6a"/><circle cx="280.4" cy="109.6" r="2.8" fill="#292e6a"/><circle cx="294.1" cy="109.6" r="2.8" fill="#292e6a"/><circle cx="307.8" cy="109.6" r="2.8" fill="#292e6a"/><circle cx="321.4" cy="109.6" r="2.8" fill="#292e6a"/><circle cx="335.1" cy="109.6" r="2.8" fill="#292e6a"/><circle cx="348.8" cy="109.6" r="2.8" fill="#292e6a"/><circle cx="362.5" cy="109.6" r="2.8" fill="#292e6a"/><circle cx="376.2" cy="109.6" r="2.8" fill="#292e6a"/><circle cx="389.8" cy="109.6" r="2.8" fill="#292e6a"/><circle cx="280.4" cy="123.1" r="2.8" fill="#292e6a"/><circle cx="294.1" cy="123.1" r="2.8" fill="#292e6a"/><circle cx="307.8" cy="123.1" r="2.8" fill="#292e6a"/><circle cx="321.4" cy="123.1" r="2.8" fill="#292e6a"/><circle cx="335.1" cy="123.1" r="2.8" fill="#292e6a"/><circle cx="348.8" cy="123.1" r="2.8" fill="#292e6a"/><circle cx="362.5" cy="123.1" r="2.8" fill="#292e6a"/><circle cx="376.2" cy="123.1" r="2.8" fill="#292e6a"/><circle cx="280.4" cy="136.2" r="2.8" fill="#292e6a"/><circle cx="294.1" cy="136.2" r="2.8" fill="#292e6a"/><circle cx="307.8" cy="136.2" r="2.8" fill="#292e6a"/><circle cx="321.4" cy="136.2" r="2.8" fill="#292e6a"/><circle cx="335.1" cy="136.2" r="2.8" fill="#292e6a"/><circle cx="348.8" cy="136.2" r="2.8" fill="#292e6a"/><circle cx="362.5" cy="136.2" r="2.8" fill="#292e6a"/></svg>
<div style="position:absolute;top:840.83px;font-family:'Liberation Sans', sans-serif;font-size:36px;line-height:36px;color:#c08843;font-weight:bold;white-space:nowrap;left:116px;width:1000px;text-align:center;">Stephen Smith</div>
<div style="position:absolute;top:887.08px;font-family:'Liberation Sans', sans-serif;font-size:24px;line-height:24px;color:#e8b98a;font-weight:normal;white-space:nowrap;left:116px;width:1000px;text-align:center;">Office Manager</div>
<div style="position:absolute;top:1052.56px;font-family:'Liberation Sans', sans-serif;font-size:18.6px;line-height:18.6px;color:#fff;font-weight:bold;white-space:nowrap;left:523px;">Access Control Card</div>
<div style="position:absolute;top:1078.76px;font-family:'Liberation Sans', sans-serif;font-size:18.6px;line-height:18.6px;color:#fff;font-weight:bold;white-space:nowrap;left:538px;">Card Id.</div>
<div style="position:absolute;top:1078.76px;font-family:'Liberation Sans', sans-serif;font-size:18.6px;line-height:18.6px;color:#fff;font-weight:normal;white-space:nowrap;left:616px;">1</div>
<div style="position:absolute;left:891px;top:411px;width:453px;height:721px;background:#fff;border-radius:11px;"></div>
<svg style="position:absolute;left:953px;top:628px;" width="73" height="73" viewBox="0 0 73 73"><rect x="0.5" y="0" width="72" height="72" fill="#c08843"/><rect x="16.34" y="3.24" width="9.36" height="9.36" fill="#e9c08d"/><rect x="16.34" y="59.40" width="9.36" height="9.36" fill="#e9c08d"/><rect x="3.74" y="15.84" width="9.36" height="9.36" fill="#e9c08d"/><rect x="59.90" y="15.84" width="9.36" height="9.36" fill="#e9c08d"/><rect x="31.82" y="3.24" width="9.36" height="9.36" fill="#e9c08d"/><rect x="31.82" y="59.40" width="9.36" height="9.36" fill="#e9c08d"/><rect x="3.74" y="31.32" width="9.36" height="9.36" fill="#e9c08d"/><rect x="59.90" y="31.32" width="9.36" height="9.36" fill="#e9c08d"/><rect x="47.30" y="3.24" width="9.36" height="9.36" fill="#e9c08d"/><rect x="47.30" y="59.40" width="9.36" height="9.36" fill="#e9c08d"/><rect x="3.74" y="46.80" width="9.36" height="9.36" fill="#e9c08d"/><rect x="59.90" y="46.80" width="9.36" height="9.36" fill="#e9c08d"/></svg>
<div style="position:absolute;top:643.42px;font-family:'Liberation Serif', serif;font-size:38.3px;line-height:38.3px;color:#c08843;font-weight:bold;white-space:nowrap;left:1046.6px;">The Company</div>
<div style="position:absolute;left:953.5px;top:747.5px;width:327px;height:2px;background:#d4a97a;"></div>
<div style="position:absolute;top:787.27px;font-family:'Liberation Sans', sans-serif;font-size:18.7px;line-height:18.7px;color:#c08843;font-weight:bold;white-space:nowrap;left:617px;width:1000px;text-align:center;">Address:</div>
<div style="position:absolute;top:808.87px;font-family:'Liberation Sans', sans-serif;font-size:18.7px;line-height:18.7px;color:#c08843;font-weight:bold;white-space:nowrap;left:617px;width:1000px;text-align:center;">4258 Kuhl Avenue</div>
<div style="position:absolute;top:829.47px;font-family:'Liberation Sans', sans-serif;font-size:18.7px;line-height:18.7px;color:#c08843;font-weight:bold;white-space:nowrap;left:617px;width:1000px;text-align:center;">Atlanta, GA 30303</div>
<div style="position:absolute;top:869.97px;font-family:'Liberation Sans', sans-serif;font-size:18.7px;line-height:18.7px;color:#c08843;font-weight:bold;white-space:nowrap;left:617px;width:1000px;text-align:center;">Phone:</div>
<div style="position:absolute;top:890.97px;font-family:'Liberation Sans', sans-serif;font-size:18.7px;line-height:18.7px;color:#c08843;font-weight:bold;white-space:nowrap;left:617px;width:1000px;text-align:center;">678-651-8293</div>
</body></html>
